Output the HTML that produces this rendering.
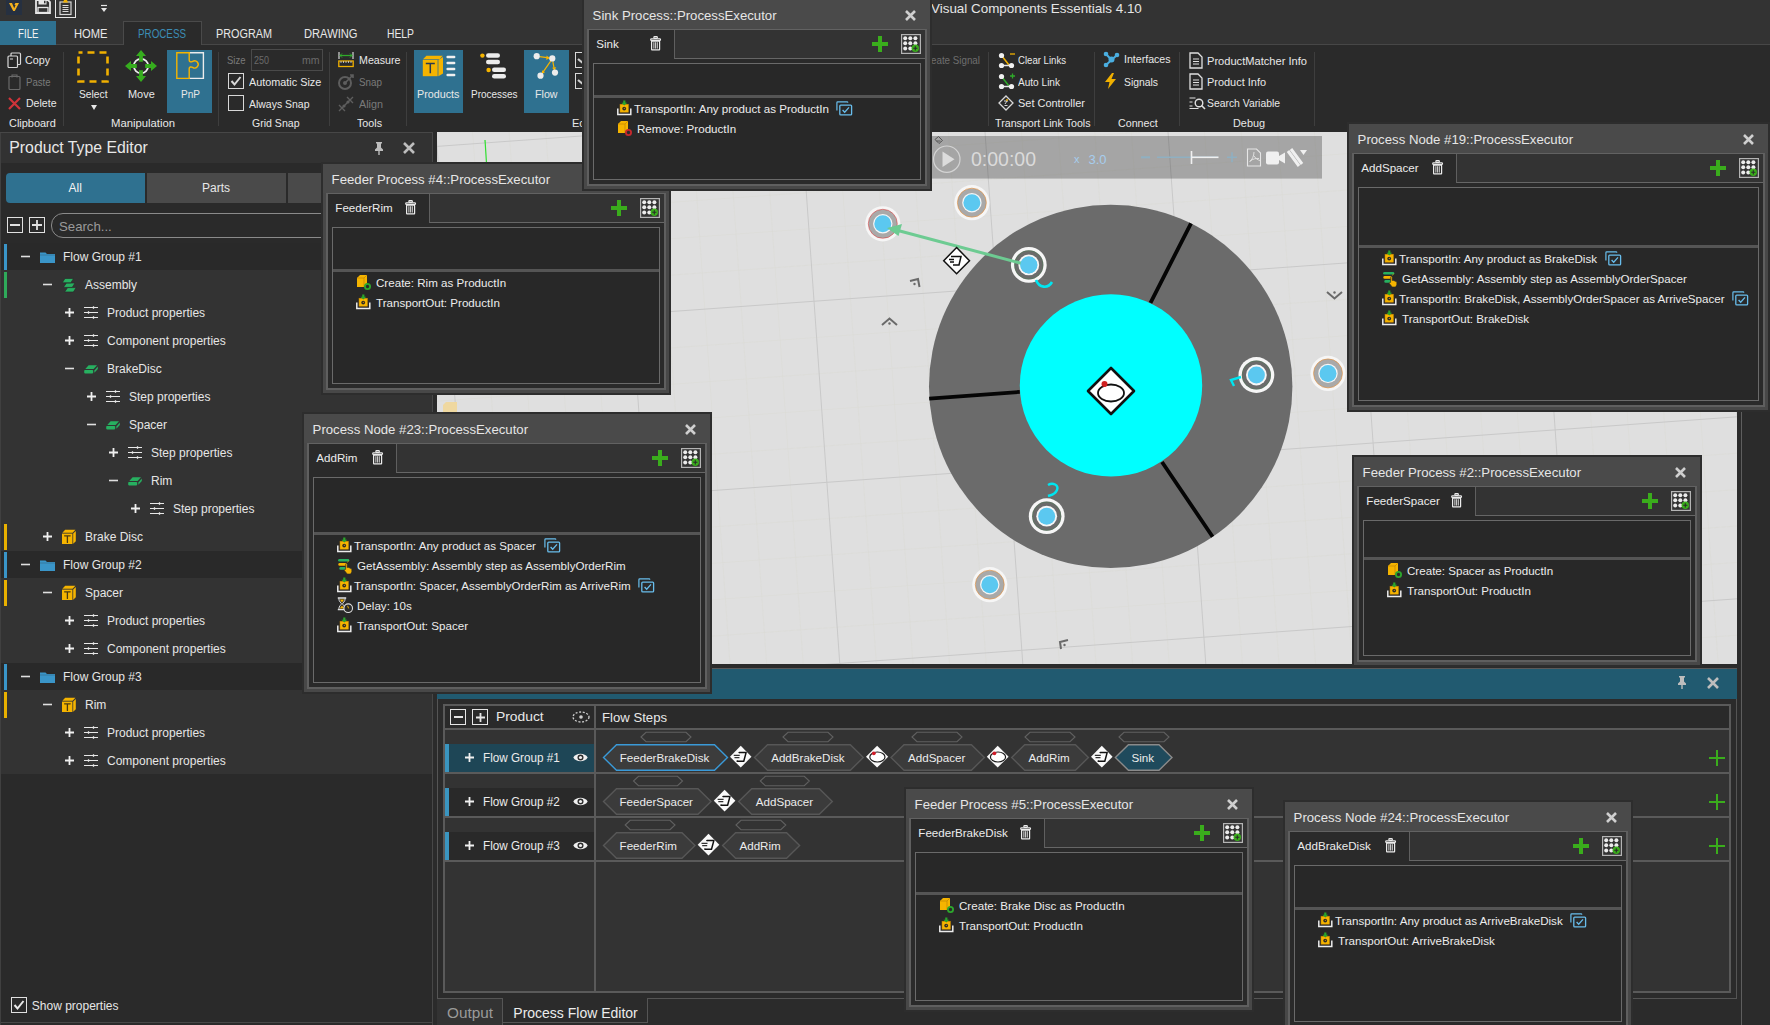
<!DOCTYPE html><html><head><meta charset='utf-8'><style>
*{box-sizing:border-box}
html,body{margin:0;padding:0;overflow:hidden;width:1770px;height:1025px}
body{width:1770px;height:1025px;overflow:hidden;position:relative;background:#2a2a2a;font-family:"Liberation Sans",sans-serif;color:#e8e8e8}
div{position:absolute}
.t{position:absolute;white-space:nowrap}
svg{position:absolute;overflow:visible}
</style></head><body>
<div style="left:0px;top:0px;width:1770px;height:44px;background:#333333"></div>
<div style="left:0px;top:44px;width:1770px;height:1px;background:#474747"></div>
<div style="left:0px;top:45px;width:1770px;height:87px;background:#2a2a2a"></div>
<div style="left:6px;top:0px;width:16px;height:15px;background:#263040"></div>
<svg style="position:absolute;left:9px;top:3px;" width="10" height="8" viewBox="0 0 10 8"><path d="M0 0h3l2.2 5.2L6.6 2H5.4L6.4 0H10L5.8 8H4.2z" fill="#f2b01e"/></svg>
<svg style="position:absolute;left:35px;top:-1px;" width="16" height="16" viewBox="0 0 16 16"><path d="M1 1h12l2 2v11H1z" fill="none" stroke="#e6e6e6" stroke-width="1.8"/><rect x="3.5" y="1" width="8" height="4.5" fill="#e6e6e6"/><rect x="9" y="1.8" width="1.5" height="2.5" fill="#333333"/><rect x="3" y="8.5" width="10" height="5" fill="#333333" stroke="#e6e6e6" stroke-width="1.3"/></svg>
<div style="left:55px;top:-2px;width:21px;height:20px;border:1.5px solid #e6e6e6"></div>
<svg style="position:absolute;left:59px;top:-1px;" width="13" height="17" viewBox="0 0 13 17"><rect x="1" y="3" width="11" height="12.5" fill="none" stroke="#d8d8d8" stroke-width="1.2"/><path d="M3.5 6.5h6M3.5 8.5h6M3.5 10.5h6M3.5 12.5h6" stroke="#d8d8d8" stroke-width="1"/><path d="M4 3.5l1-2.5h3l1 2.5z" fill="#f0b000"/></svg>
<svg style="position:absolute;left:101px;top:5px;" width="6" height="8" viewBox="0 0 6 8"><path d="M0 0.5h6" stroke="#e6e6e6" stroke-width="1.2"/><path d="M0 3h6L3 7z" fill="#e6e6e6"/></svg>
<div class="t" style="left:931px;top:0.0px;font-size:13.4px;line-height:17px;color:#e6e6e6;transform:scaleX(1.002);transform-origin:0 50%;">Visual Components Essentials 4.10</div>
<div style="left:0px;top:21px;width:56px;height:24px;background:#2f7190"></div>
<div class="t" style="left:18px;top:25.5px;font-size:12px;line-height:16px;color:#f2f2f2;transform:scaleX(0.809);transform-origin:0 50%;">FILE</div>
<div class="t" style="left:73.6px;top:25.5px;font-size:12px;line-height:16px;color:#e8e8e8;transform:scaleX(0.931);transform-origin:0 50%;">HOME</div>
<div style="left:123px;top:21px;width:79px;height:24px;background:#2a2a2a;border:1px solid #4a4a4a;border-bottom:none"></div>
<div class="t" style="left:137.7px;top:25.5px;font-size:12px;line-height:16px;color:#3c8db5;transform:scaleX(0.818);transform-origin:0 50%;">PROCESS</div>
<div class="t" style="left:216.3px;top:25.5px;font-size:12px;line-height:16px;color:#e8e8e8;transform:scaleX(0.903);transform-origin:0 50%;">PROGRAM</div>
<div class="t" style="left:303.6px;top:25.5px;font-size:12px;line-height:16px;color:#e8e8e8;transform:scaleX(0.930);transform-origin:0 50%;">DRAWING</div>
<div class="t" style="left:387.3px;top:25.5px;font-size:12px;line-height:16px;color:#e8e8e8;transform:scaleX(0.861);transform-origin:0 50%;">HELP</div>
<svg style="position:absolute;left:7px;top:52px;" width="15" height="16" viewBox="0 0 15 16"><rect x="4" y="1" width="9.5" height="11.5" rx="1" fill="#272727" stroke="#d8d8d8" stroke-width="1.2"/><rect x="1" y="4" width="9.5" height="11.5" rx="1" fill="#272727" stroke="#d8d8d8" stroke-width="1.2"/><path d="M3 7h3" stroke="#d8d8d8"/></svg>
<div class="t" style="left:25px;top:53.0px;font-size:11px;line-height:14px;color:#e8e8e8;transform:scaleX(0.974);transform-origin:0 50%;">Copy</div>
<svg style="position:absolute;left:8px;top:74px;" width="13" height="16" viewBox="0 0 13 16"><rect x="1" y="2.5" width="11" height="13" rx="1" fill="none" stroke="#6a6a6a" stroke-width="1.2"/><path d="M4 3.5V1h5v2.5" fill="none" stroke="#6a6a6a" stroke-width="1.1"/></svg>
<div class="t" style="left:25.5px;top:75.0px;font-size:11px;line-height:14px;color:#7a7a7a;transform:scaleX(0.871);transform-origin:0 50%;">Paste</div>
<svg style="position:absolute;left:8px;top:97px;" width="13" height="13" viewBox="0 0 13 13"><path d="M1 1L12 12M12 1L1 12" stroke="#d0343a" stroke-width="2.2"/></svg>
<div class="t" style="left:25.5px;top:96.0px;font-size:11px;line-height:14px;color:#e8e8e8;transform:scaleX(0.959);transform-origin:0 50%;">Delete</div>
<div class="t" style="left:8.5px;top:116.0px;font-size:11px;line-height:14px;color:#e8e8e8;transform:scaleX(0.994);transform-origin:0 50%;">Clipboard</div>
<div style="left:63px;top:52px;width:1px;height:74px;background:#3e3e3e"></div>
<svg style="position:absolute;left:77px;top:51px;" width="32" height="32" viewBox="0 0 32 32"><rect x="1.5" y="1.5" width="29" height="29" fill="none" stroke="#f0b000" stroke-width="2.6" stroke-dasharray="7 5" stroke-dashoffset="3"/></svg>
<div class="t" style="left:78.5px;top:87.0px;font-size:11px;line-height:14px;color:#e8e8e8;transform:scaleX(0.932);transform-origin:0 50%;">Select</div>
<svg style="position:absolute;left:91px;top:105px;" width="6" height="5" viewBox="0 0 6 5"><path d="M0 0h6L3 5z" fill="#e8e8e8"/></svg>
<svg style="position:absolute;left:125px;top:50px;" width="32" height="32" viewBox="0 0 32 32"><circle cx="16" cy="16" r="7.2" fill="none" stroke="#ececec" stroke-width="1.7"/><g fill="#36ad1e"><path d="M16 0l-5 6h3.1v5.8h3.8V6H21z"/><path d="M16 32l-5-6h3.1v-5.8h3.8V26H21z"/><path d="M0 16l6-5v3.1h5.8v3.8H6V21z"/><path d="M32 16l-6-5v3.1h-5.8v3.8H26V21z"/></g></svg>
<div class="t" style="left:127.7px;top:87.0px;font-size:11px;line-height:14px;color:#e8e8e8;transform:scaleX(0.993);transform-origin:0 50%;">Move</div>
<div style="left:167px;top:50px;width:45px;height:63px;background:#2f7190"></div>
<svg style="position:absolute;left:176px;top:52px;" width="28" height="28" viewBox="0 0 28 28"><path d="M13.2 0.8H27.4V26.4H13.2" fill="none" stroke="#ececec" stroke-width="1.4"/><path d="M13.2 0.8V8.2C13.2 10 15.2 10.2 16.6 9.4A3.6 3.6 0 1 1 16.6 15.4C15.2 14.6 13.2 14.8 13.2 16.6V26.4H0.8V0.8z" fill="none" stroke="#f5b400" stroke-width="1.4"/></svg>
<div class="t" style="left:180.6px;top:87.0px;font-size:11px;line-height:14px;color:#e8e8e8;transform:scaleX(0.914);transform-origin:0 50%;">PnP</div>
<div class="t" style="left:110.7px;top:116.0px;font-size:11px;line-height:14px;color:#e8e8e8;transform:scaleX(1.026);transform-origin:0 50%;">Manipulation</div>
<div style="left:218px;top:52px;width:1px;height:74px;background:#3e3e3e"></div>
<div class="t" style="left:226.7px;top:53.0px;font-size:11px;line-height:14px;color:#7a7a7a;transform:scaleX(0.865);transform-origin:0 50%;">Size</div>
<div style="left:251px;top:49px;width:72px;height:22px;border:1px solid #4a4a4a"></div>
<div class="t" style="left:253.6px;top:53.0px;font-size:11px;line-height:14px;color:#6a6a6a;transform:scaleX(0.817);transform-origin:0 50%;">250</div>
<div class="t" style="left:301.7px;top:53.0px;font-size:11px;line-height:14px;color:#6a6a6a;transform:scaleX(0.960);transform-origin:0 50%;">mm</div>
<div style="left:228px;top:73px;width:16px;height:16px;border:1.2px solid #d8d8d8"></div>
<svg style="position:absolute;left:230px;top:75px;" width="12" height="12" viewBox="0 0 12 12"><path d="M1.5 6l3 3.5L10.5 2" fill="none" stroke="#d8d8d8" stroke-width="2"/></svg>
<div class="t" style="left:249.3px;top:75.0px;font-size:11px;line-height:14px;color:#e8e8e8;transform:scaleX(0.985);transform-origin:0 50%;">Automatic Size</div>
<div style="left:228px;top:95px;width:16px;height:16px;border:1.2px solid #d8d8d8"></div>
<div class="t" style="left:249.3px;top:97.0px;font-size:11px;line-height:14px;color:#e8e8e8;transform:scaleX(0.951);transform-origin:0 50%;">Always Snap</div>
<div class="t" style="left:251.5px;top:116.0px;font-size:11px;line-height:14px;color:#e8e8e8;transform:scaleX(0.959);transform-origin:0 50%;">Grid Snap</div>
<div style="left:329px;top:52px;width:1px;height:74px;background:#3e3e3e"></div>
<svg style="position:absolute;left:338px;top:52px;" width="16" height="15" viewBox="0 0 16 15"><path d="M1 0v7M15 0v7" stroke="#d8d8d8" stroke-width="1.2"/><path d="M2 3.5h12" stroke="#2faa2a" stroke-width="1.3"/><path d="M2 3.5l2-2M2 3.5l2 2M14 3.5l-2-2M14 3.5l-2 2" stroke="#2faa2a" stroke-width="1"/><rect x="0.8" y="9" width="14.4" height="5.5" fill="none" stroke="#f0b000" stroke-width="1.3"/><path d="M3 9v2M5.5 9v2M8 9v2M10.5 9v2M13 9v2" stroke="#d8d8d8" stroke-width="0.8"/></svg>
<div class="t" style="left:358.6px;top:52.5px;font-size:11px;line-height:14px;color:#e8e8e8;transform:scaleX(0.970);transform-origin:0 50%;">Measure</div>
<svg style="position:absolute;left:338px;top:74px;" width="17" height="16" viewBox="0 0 17 16"><circle cx="7" cy="9" r="6" fill="none" stroke="#5e5e5e" stroke-width="2"/><circle cx="7" cy="9" r="2" fill="#5e5e5e"/><path d="M8 8l7-7M12 1h3v3" stroke="#5e5e5e" stroke-width="1.6" fill="none"/></svg>
<div class="t" style="left:358.6px;top:74.5px;font-size:11px;line-height:14px;color:#7a7a7a;transform:scaleX(0.895);transform-origin:0 50%;">Snap</div>
<svg style="position:absolute;left:338px;top:96px;" width="16" height="16" viewBox="0 0 16 16"><path d="M1 15L15 1M1 9l6 6M9 1l6 6" stroke="#5e5e5e" stroke-width="1.4"/><circle cx="6" cy="10" r="1.6" fill="#5e5e5e"/><circle cx="10" cy="6" r="1.6" fill="#5e5e5e"/></svg>
<div class="t" style="left:358.6px;top:96.5px;font-size:11px;line-height:14px;color:#7a7a7a;transform:scaleX(0.981);transform-origin:0 50%;">Align</div>
<div class="t" style="left:357px;top:116.0px;font-size:11px;line-height:14px;color:#e8e8e8;transform:scaleX(0.974);transform-origin:0 50%;">Tools</div>
<div style="left:406px;top:52px;width:1px;height:74px;background:#3e3e3e"></div>
<div style="left:414px;top:50px;width:49px;height:63px;background:#2f7190"></div>
<svg style="position:absolute;left:422px;top:55px;" width="34" height="22" viewBox="0 0 34 22"><g fill="#f5b400"><path d="M4.4 0.8H20.8L17.6 4.2H1z"/><rect x="0.8" y="4.9" width="14.8" height="16.3"/><path d="M21 2V18.4L16.4 21.2V4.9z"/></g><path d="M3.8 8.6h9M8.3 8.6v9.6" stroke="#2a3a50" stroke-width="1.5"/><g stroke="#f0f0f0" stroke-width="2.4" stroke-linecap="round"><path d="M25.6 2h6.6M25.6 8h6.6M25.6 14h6.6M25.6 20h6.6"/></g></svg>
<div class="t" style="left:417.4px;top:87.0px;font-size:11px;line-height:14px;color:#e8e8e8;transform:scaleX(0.979);transform-origin:0 50%;">Products</div>
<svg style="position:absolute;left:480px;top:53px;" width="27" height="26" viewBox="0 0 27 26"><circle cx="2.4" cy="2.6" r="2.2" fill="#f5b400"/><circle cx="8.6" cy="17" r="2.2" fill="#f5b400"/><g fill="#ececec"><rect x="6" y="0.2" width="14" height="4.6" rx="2.3"/><rect x="6" y="6.8" width="14" height="4.4" rx="2.2"/><rect x="12" y="14.6" width="14" height="4.4" rx="2.2"/><rect x="12" y="21" width="14" height="4.6" rx="2.3"/></g></svg>
<div class="t" style="left:470.5px;top:87.0px;font-size:11px;line-height:14px;color:#e8e8e8;transform:scaleX(0.905);transform-origin:0 50%;">Processes</div>
<div style="left:524px;top:50px;width:45px;height:63px;background:#2f7190"></div>
<svg style="position:absolute;left:533px;top:53px;" width="27" height="26" viewBox="0 0 27 26"><g stroke="#f5b400" stroke-width="1.2" fill="none"><path d="M6.5 3.6L16 4.9M18 7.6L9.3 20.2M19.8 8.3L21.3 16.4"/></g><g fill="#f5b400"><path d="M16.8 5L13.6 2.6 13.2 7z"/><path d="M8.6 21.2L9.2 17.2 12 19.2z"/><path d="M21.6 17.4L19 14.7 23.2 14.3z"/></g><g fill="#ececec"><circle cx="3.7" cy="3.2" r="3.1"/><circle cx="19.3" cy="5.4" r="3.1"/><circle cx="7.5" cy="22.7" r="3.1"/><circle cx="22" cy="19.6" r="3.1"/></g></svg>
<div class="t" style="left:535px;top:87.0px;font-size:11px;line-height:14px;color:#e8e8e8;transform:scaleX(0.969);transform-origin:0 50%;">Flow</div>
<div style="left:575px;top:52px;width:10px;height:16px;border:1.3px solid #d8d8d8;border-right:none"></div>
<div style="left:575px;top:73px;width:10px;height:16px;border:1.3px solid #d8d8d8;border-right:none"></div>
<svg style="position:absolute;left:577px;top:58px;" width="8" height="30" viewBox="0 0 8 30"><path d="M1 1l6 5M1 22l6 5" stroke="#cfcfcf" stroke-width="2.2"/></svg>
<div class="t" style="left:572px;top:116.0px;font-size:11px;line-height:14px;color:#e8e8e8;">Ec</div>
<div class="t" style="left:931px;top:53.0px;font-size:11px;line-height:14px;color:#6e6e6e;transform:scaleX(0.890);transform-origin:0 50%;">eate Signal</div>
<div style="left:988px;top:52px;width:1px;height:74px;background:#3e3e3e"></div>
<svg style="position:absolute;left:998px;top:52px;" width="18" height="17" viewBox="0 0 18 17"><path d="M3.5 3.5L11 13" stroke="#f0b000" stroke-width="1.5"/><path d="M3.5 13.5h10" stroke="#e6e6e6" stroke-width="1.5"/><circle cx="3.5" cy="3.5" r="2.6" fill="#f0f0f0"/><circle cx="3.5" cy="13.5" r="2.6" fill="#f0f0f0"/><circle cx="13.5" cy="13.5" r="2.6" fill="#f0f0f0"/><path d="M12 2h5" stroke="#f0b000" stroke-width="1.3"/></svg>
<div class="t" style="left:1017.8px;top:53.0px;font-size:11px;line-height:14px;color:#e8e8e8;transform:scaleX(0.872);transform-origin:0 50%;">Clear Links</div>
<svg style="position:absolute;left:998px;top:73px;" width="18" height="17" viewBox="0 0 18 17"><path d="M3.5 3.5L11 13" stroke="#2faa2a" stroke-width="1.5"/><path d="M3.5 13.5h10" stroke="#e6e6e6" stroke-width="1.5"/><circle cx="3.5" cy="3.5" r="2.6" fill="#f0f0f0"/><circle cx="3.5" cy="13.5" r="2.6" fill="#f0f0f0"/><circle cx="13.5" cy="13.5" r="2.6" fill="#f0f0f0"/><path d="M12 3h5M14.5 0.5v5" stroke="#2faa2a" stroke-width="1.3"/></svg>
<div class="t" style="left:1017.8px;top:75.0px;font-size:11px;line-height:14px;color:#e8e8e8;transform:scaleX(0.916);transform-origin:0 50%;">Auto Link</div>
<svg style="position:absolute;left:998px;top:95px;" width="16" height="16" viewBox="0 0 16 16"><path d="M8 1l7 7-7 7-7-7z" fill="none" stroke="#d8d8d8" stroke-width="1.3"/><path d="M6 6h4M7 9l2 -3M6.5 10.5h3" stroke="#d8d8d8" stroke-width="1"/><circle cx="9" cy="5" r="1" fill="#f0b000"/></svg>
<div class="t" style="left:1017.8px;top:96.0px;font-size:11px;line-height:14px;color:#e8e8e8;transform:scaleX(0.996);transform-origin:0 50%;">Set Controller</div>
<div class="t" style="left:995px;top:116.0px;font-size:11px;line-height:14px;color:#e8e8e8;transform:scaleX(0.971);transform-origin:0 50%;">Transport Link Tools</div>
<div style="left:1094px;top:52px;width:1px;height:74px;background:#3e3e3e"></div>
<svg style="position:absolute;left:1103px;top:51px;" width="17" height="16" viewBox="0 0 17 16"><path d="M3 3l5.5 6M3 14l5.5-5M8.5 9L14 4" stroke="#4aaee0" stroke-width="2"/><circle cx="8.5" cy="8.5" r="3" fill="#4aaee0"/><circle cx="3" cy="3" r="2.3" fill="#4aaee0"/><circle cx="3" cy="14" r="2.3" fill="#4aaee0"/><circle cx="14" cy="4" r="2.3" fill="#4aaee0"/></svg>
<div class="t" style="left:1123.8px;top:52.0px;font-size:11px;line-height:14px;color:#e8e8e8;transform:scaleX(0.963);transform-origin:0 50%;">Interfaces</div>
<svg style="position:absolute;left:1105px;top:73px;" width="12" height="16" viewBox="0 0 12 16"><path d="M7 0L0 9h4.5L3 16l8-10H6.5L9 0z" fill="#f0b000"/></svg>
<div class="t" style="left:1123.8px;top:74.5px;font-size:11px;line-height:14px;color:#e8e8e8;transform:scaleX(0.942);transform-origin:0 50%;">Signals</div>
<div class="t" style="left:1118.2px;top:116.0px;font-size:11px;line-height:14px;color:#e8e8e8;transform:scaleX(0.971);transform-origin:0 50%;">Connect</div>
<div style="left:1179px;top:52px;width:1px;height:74px;background:#3e3e3e"></div>
<svg style="position:absolute;left:1189px;top:52px;" width="14" height="17" viewBox="0 0 14 17"><path d="M1 1h8l4 4v11H1z" fill="none" stroke="#e0e0e0" stroke-width="1.3"/><path d="M4 7h6M4 9.5h6M4 12h6" stroke="#e0e0e0" stroke-width="1.1"/></svg>
<div class="t" style="left:1207px;top:53.5px;font-size:11px;line-height:14px;color:#e8e8e8;transform:scaleX(1.009);transform-origin:0 50%;">ProductMatcher Info</div>
<svg style="position:absolute;left:1189px;top:73px;" width="14" height="17" viewBox="0 0 14 17"><path d="M1 1h8l4 4v11H1z" fill="none" stroke="#e0e0e0" stroke-width="1.3"/><path d="M4 7h6M4 9.5h6M4 12h6" stroke="#e0e0e0" stroke-width="1.1"/></svg>
<div class="t" style="left:1207px;top:74.5px;font-size:11px;line-height:14px;color:#e8e8e8;transform:scaleX(0.995);transform-origin:0 50%;">Product Info</div>
<svg style="position:absolute;left:1189px;top:97px;" width="17" height="12" viewBox="0 0 17 12"><path d="M0.5 1h6M0.5 5h3M0.5 9h3M0.5 11.5h9" stroke="#e0e0e0" stroke-width="1.2"/><circle cx="10" cy="6" r="3.8" fill="none" stroke="#e0e0e0" stroke-width="1.4"/><path d="M12.5 8.5l3.5 3.5" stroke="#e0e0e0" stroke-width="1.6"/></svg>
<div class="t" style="left:1207px;top:96.0px;font-size:11px;line-height:14px;color:#e8e8e8;transform:scaleX(0.943);transform-origin:0 50%;">Search Variable</div>
<div class="t" style="left:1232.5px;top:116.0px;font-size:11px;line-height:14px;color:#e8e8e8;transform:scaleX(0.987);transform-origin:0 50%;">Debug</div>
<div style="left:1314px;top:52px;width:1px;height:74px;background:#3e3e3e"></div>
<div style="left:0px;top:132px;width:433px;height:893px;background:#2a2a2a"></div>
<div style="left:0px;top:132px;width:1px;height:893px;background:#404040"></div>
<div style="left:432px;top:132px;width:1px;height:893px;background:#474747"></div>
<div style="left:0px;top:132px;width:433px;height:1px;background:#474747"></div>
<div style="left:1px;top:133px;width:431px;height:30px;background:#323232"></div>
<div class="t" style="left:9.3px;top:137.0px;font-size:15.8px;line-height:21px;color:#e8e8e8;">Product Type Editor</div>
<svg style="position:absolute;left:374px;top:142px;" width="10" height="13" viewBox="0 0 10 13"><path d="M2 0h6v1.5H7v4l2 2v1.5H1V7.5l2-2v-4H2z" fill="#bdbdbd"/><rect x="4.3" y="9" width="1.4" height="4" fill="#bdbdbd"/></svg>
<svg style="position:absolute;left:403px;top:142px;" width="12" height="12" viewBox="0 0 12 12"><path d="M1 1L11 11M11 1L1 11" stroke="#bdbdbd" stroke-width="2.6"/></svg>
<div style="left:6px;top:173px;width:139px;height:30px;background:#2f7190;border-radius:4px 0 0 4px"></div>
<div class="t" style="left:68.5px;top:180.0px;font-size:12px;line-height:16px;color:#f4f4f4;">All</div>
<div style="left:147px;top:173px;width:139px;height:30px;background:#4a4a4a"></div>
<div class="t" style="left:202px;top:180.0px;font-size:12px;line-height:16px;color:#e8e8e8;">Parts</div>
<div style="left:288px;top:173px;width:144px;height:30px;background:#4a4a4a"></div>
<div style="left:7px;top:217px;width:16px;height:16px;border:1.5px solid #e0e0e0"></div>
<svg style="position:absolute;left:10px;top:224px;" width="10" height="2" viewBox="0 0 10 2"><rect width="10" height="2" fill="#e0e0e0"/></svg>
<div style="left:29px;top:217px;width:16px;height:16px;border:1.5px solid #e0e0e0"></div>
<svg style="position:absolute;left:32px;top:220px;" width="10" height="10" viewBox="0 0 10 10"><path d="M5 0v10M0 5h10" stroke="#e0e0e0" stroke-width="1.8"/></svg>
<div style="left:51px;top:213px;width:400px;height:25px;border:1.2px solid #8a8a8a;border-radius:12px"></div>
<div class="t" style="left:59px;top:218.0px;font-size:13.2px;line-height:17px;color:#9a9a9a;">Search...</div>
<div style="left:1px;top:243px;width:431px;height:531px;background:#333333"></div>
<div style="left:1px;top:243.2px;width:431px;height:27px;background:#292929"></div>
<div style="left:4px;top:243.7px;width:3px;height:26px;background:#3a95c8"></div>
<svg style="position:absolute;left:20.5px;top:252.2px;" width="9" height="9" viewBox="0 0 9 9"><path d="M0 4.5h9" stroke="#e0e0e0" stroke-width="1.6"/></svg>
<svg style="position:absolute;left:40px;top:250.7px;" width="15" height="12" viewBox="0 0 15 12"><path d="M0 1.5h5.5l1.5 1.5H15V12H0z" fill="#3a95c8"/><path d="M0 4h15" stroke="#2a2a2a" stroke-width="0.6" opacity="0.4"/></svg>
<div class="t" style="left:63px;top:248.7px;font-size:12px;line-height:16px;color:#e6e6e6;">Flow Group #1</div>
<div style="left:4px;top:271.7px;width:3px;height:26px;background:#2faa5a"></div>
<svg style="position:absolute;left:42.5px;top:280.2px;" width="9" height="9" viewBox="0 0 9 9"><path d="M0 4.5h9" stroke="#e0e0e0" stroke-width="1.6"/></svg>
<svg style="position:absolute;left:62px;top:277.7px;" width="15" height="15" viewBox="0 0 15 15"><g fill="#27b060" stroke="#2a2a2a" stroke-width="0.7" stroke-linejoin="round"><path d="M5.6 9.6H14.2L11.4 14H2.6z"/><path d="M4.4 5H13L10.2 9.4H1.4z"/><path d="M3 0.4H11.6L8.8 4.8H0.2z"/></g></svg>
<div class="t" style="left:85px;top:276.7px;font-size:12px;line-height:16px;color:#e6e6e6;">Assembly</div>
<svg style="position:absolute;left:64.5px;top:308.2px;" width="9" height="9" viewBox="0 0 9 9"><path d="M4.5 0v9M0 4.5h9" stroke="#f0f0f0" stroke-width="1.8"/></svg>
<svg style="position:absolute;left:84px;top:306.2px;" width="15" height="13" viewBox="0 0 15 13"><path d="M0 1.5h14M0 6.5h14M0 11.5h14" stroke="#e8e8e8" stroke-width="1"/><path d="M9.5 0l1.5 1.5-1.5 1.5-1.5-1.5zM4.5 5l1.5 1.5-1.5 1.5-1.5-1.5zM9.5 10l1.5 1.5-1.5 1.5-1.5-1.5z" fill="#e8e8e8"/></svg>
<div class="t" style="left:107px;top:304.7px;font-size:12px;line-height:16px;color:#e6e6e6;">Product properties</div>
<svg style="position:absolute;left:64.5px;top:336.2px;" width="9" height="9" viewBox="0 0 9 9"><path d="M4.5 0v9M0 4.5h9" stroke="#f0f0f0" stroke-width="1.8"/></svg>
<svg style="position:absolute;left:84px;top:334.2px;" width="15" height="13" viewBox="0 0 15 13"><path d="M0 1.5h14M0 6.5h14M0 11.5h14" stroke="#e8e8e8" stroke-width="1"/><path d="M9.5 0l1.5 1.5-1.5 1.5-1.5-1.5zM4.5 5l1.5 1.5-1.5 1.5-1.5-1.5zM9.5 10l1.5 1.5-1.5 1.5-1.5-1.5z" fill="#e8e8e8"/></svg>
<div class="t" style="left:107px;top:332.7px;font-size:12px;line-height:16px;color:#e6e6e6;">Component properties</div>
<svg style="position:absolute;left:64.5px;top:364.2px;" width="9" height="9" viewBox="0 0 9 9"><path d="M0 4.5h9" stroke="#e0e0e0" stroke-width="1.6"/></svg>
<svg style="position:absolute;left:84px;top:363.7px;" width="15" height="10" viewBox="0 0 15 10"><g fill="#27b060"><path d="M4.6 1.2H13L9.6 5.1H1.3z"/><rect x="0.2" y="6" width="9" height="3.4" rx="0.8"/><path d="M13.8 2.6V5L10.4 8.8V6.4z"/></g></svg>
<div class="t" style="left:107px;top:360.7px;font-size:12px;line-height:16px;color:#e6e6e6;">BrakeDisc</div>
<svg style="position:absolute;left:86.5px;top:392.2px;" width="9" height="9" viewBox="0 0 9 9"><path d="M4.5 0v9M0 4.5h9" stroke="#f0f0f0" stroke-width="1.8"/></svg>
<svg style="position:absolute;left:106px;top:390.2px;" width="15" height="13" viewBox="0 0 15 13"><path d="M0 1.5h14M0 6.5h14M0 11.5h14" stroke="#e8e8e8" stroke-width="1"/><path d="M9.5 0l1.5 1.5-1.5 1.5-1.5-1.5zM4.5 5l1.5 1.5-1.5 1.5-1.5-1.5zM9.5 10l1.5 1.5-1.5 1.5-1.5-1.5z" fill="#e8e8e8"/></svg>
<div class="t" style="left:129px;top:388.7px;font-size:12px;line-height:16px;color:#e6e6e6;">Step properties</div>
<svg style="position:absolute;left:86.5px;top:420.2px;" width="9" height="9" viewBox="0 0 9 9"><path d="M0 4.5h9" stroke="#e0e0e0" stroke-width="1.6"/></svg>
<svg style="position:absolute;left:106px;top:419.7px;" width="15" height="10" viewBox="0 0 15 10"><g fill="#27b060"><path d="M4.6 1.2H13L9.6 5.1H1.3z"/><rect x="0.2" y="6" width="9" height="3.4" rx="0.8"/><path d="M13.8 2.6V5L10.4 8.8V6.4z"/></g></svg>
<div class="t" style="left:129px;top:416.7px;font-size:12px;line-height:16px;color:#e6e6e6;">Spacer</div>
<svg style="position:absolute;left:108.5px;top:448.2px;" width="9" height="9" viewBox="0 0 9 9"><path d="M4.5 0v9M0 4.5h9" stroke="#f0f0f0" stroke-width="1.8"/></svg>
<svg style="position:absolute;left:128px;top:446.2px;" width="15" height="13" viewBox="0 0 15 13"><path d="M0 1.5h14M0 6.5h14M0 11.5h14" stroke="#e8e8e8" stroke-width="1"/><path d="M9.5 0l1.5 1.5-1.5 1.5-1.5-1.5zM4.5 5l1.5 1.5-1.5 1.5-1.5-1.5zM9.5 10l1.5 1.5-1.5 1.5-1.5-1.5z" fill="#e8e8e8"/></svg>
<div class="t" style="left:151px;top:444.7px;font-size:12px;line-height:16px;color:#e6e6e6;">Step properties</div>
<svg style="position:absolute;left:108.5px;top:476.2px;" width="9" height="9" viewBox="0 0 9 9"><path d="M0 4.5h9" stroke="#e0e0e0" stroke-width="1.6"/></svg>
<svg style="position:absolute;left:128px;top:475.7px;" width="15" height="10" viewBox="0 0 15 10"><g fill="#27b060"><path d="M4.6 1.2H13L9.6 5.1H1.3z"/><rect x="0.2" y="6" width="9" height="3.4" rx="0.8"/><path d="M13.8 2.6V5L10.4 8.8V6.4z"/></g></svg>
<div class="t" style="left:151px;top:472.7px;font-size:12px;line-height:16px;color:#e6e6e6;">Rim</div>
<svg style="position:absolute;left:130.5px;top:504.2px;" width="9" height="9" viewBox="0 0 9 9"><path d="M4.5 0v9M0 4.5h9" stroke="#f0f0f0" stroke-width="1.8"/></svg>
<svg style="position:absolute;left:150px;top:502.2px;" width="15" height="13" viewBox="0 0 15 13"><path d="M0 1.5h14M0 6.5h14M0 11.5h14" stroke="#e8e8e8" stroke-width="1"/><path d="M9.5 0l1.5 1.5-1.5 1.5-1.5-1.5zM4.5 5l1.5 1.5-1.5 1.5-1.5-1.5zM9.5 10l1.5 1.5-1.5 1.5-1.5-1.5z" fill="#e8e8e8"/></svg>
<div class="t" style="left:173px;top:500.7px;font-size:12px;line-height:16px;color:#e6e6e6;">Step properties</div>
<div style="left:4px;top:523.7px;width:3px;height:26px;background:#e8b000"></div>
<svg style="position:absolute;left:42.5px;top:532.2px;" width="9" height="9" viewBox="0 0 9 9"><path d="M4.5 0v9M0 4.5h9" stroke="#f0f0f0" stroke-width="1.8"/></svg>
<svg style="position:absolute;left:62px;top:529.2px;" width="15" height="16" viewBox="0 0 15 16"><g fill="#f5b400"><path d="M3.2 0.8H13.4L10.6 3.8H0.4z"/><rect x="0" y="4.6" width="10.4" height="10.4"/><path d="M13.8 2V12.2L11.2 14.8V4.6z"/></g><path d="M2.6 6.8h5.6M5.4 6.8v6.6" stroke="#4a3a10" stroke-width="1.3" stroke-linecap="round"/></svg>
<div class="t" style="left:85px;top:528.7px;font-size:12px;line-height:16px;color:#e6e6e6;">Brake Disc</div>
<div style="left:1px;top:551.2px;width:431px;height:27px;background:#292929"></div>
<div style="left:4px;top:551.7px;width:3px;height:26px;background:#3a95c8"></div>
<svg style="position:absolute;left:20.5px;top:560.2px;" width="9" height="9" viewBox="0 0 9 9"><path d="M0 4.5h9" stroke="#e0e0e0" stroke-width="1.6"/></svg>
<svg style="position:absolute;left:40px;top:558.7px;" width="15" height="12" viewBox="0 0 15 12"><path d="M0 1.5h5.5l1.5 1.5H15V12H0z" fill="#3a95c8"/><path d="M0 4h15" stroke="#2a2a2a" stroke-width="0.6" opacity="0.4"/></svg>
<div class="t" style="left:63px;top:556.7px;font-size:12px;line-height:16px;color:#e6e6e6;">Flow Group #2</div>
<div style="left:4px;top:579.7px;width:3px;height:26px;background:#e8b000"></div>
<svg style="position:absolute;left:42.5px;top:588.2px;" width="9" height="9" viewBox="0 0 9 9"><path d="M0 4.5h9" stroke="#e0e0e0" stroke-width="1.6"/></svg>
<svg style="position:absolute;left:62px;top:585.2px;" width="15" height="16" viewBox="0 0 15 16"><g fill="#f5b400"><path d="M3.2 0.8H13.4L10.6 3.8H0.4z"/><rect x="0" y="4.6" width="10.4" height="10.4"/><path d="M13.8 2V12.2L11.2 14.8V4.6z"/></g><path d="M2.6 6.8h5.6M5.4 6.8v6.6" stroke="#4a3a10" stroke-width="1.3" stroke-linecap="round"/></svg>
<div class="t" style="left:85px;top:584.7px;font-size:12px;line-height:16px;color:#e6e6e6;">Spacer</div>
<svg style="position:absolute;left:64.5px;top:616.2px;" width="9" height="9" viewBox="0 0 9 9"><path d="M4.5 0v9M0 4.5h9" stroke="#f0f0f0" stroke-width="1.8"/></svg>
<svg style="position:absolute;left:84px;top:614.2px;" width="15" height="13" viewBox="0 0 15 13"><path d="M0 1.5h14M0 6.5h14M0 11.5h14" stroke="#e8e8e8" stroke-width="1"/><path d="M9.5 0l1.5 1.5-1.5 1.5-1.5-1.5zM4.5 5l1.5 1.5-1.5 1.5-1.5-1.5zM9.5 10l1.5 1.5-1.5 1.5-1.5-1.5z" fill="#e8e8e8"/></svg>
<div class="t" style="left:107px;top:612.7px;font-size:12px;line-height:16px;color:#e6e6e6;">Product properties</div>
<svg style="position:absolute;left:64.5px;top:644.2px;" width="9" height="9" viewBox="0 0 9 9"><path d="M4.5 0v9M0 4.5h9" stroke="#f0f0f0" stroke-width="1.8"/></svg>
<svg style="position:absolute;left:84px;top:642.2px;" width="15" height="13" viewBox="0 0 15 13"><path d="M0 1.5h14M0 6.5h14M0 11.5h14" stroke="#e8e8e8" stroke-width="1"/><path d="M9.5 0l1.5 1.5-1.5 1.5-1.5-1.5zM4.5 5l1.5 1.5-1.5 1.5-1.5-1.5zM9.5 10l1.5 1.5-1.5 1.5-1.5-1.5z" fill="#e8e8e8"/></svg>
<div class="t" style="left:107px;top:640.7px;font-size:12px;line-height:16px;color:#e6e6e6;">Component properties</div>
<div style="left:1px;top:663.2px;width:431px;height:27px;background:#292929"></div>
<div style="left:4px;top:663.7px;width:3px;height:26px;background:#3a95c8"></div>
<svg style="position:absolute;left:20.5px;top:672.2px;" width="9" height="9" viewBox="0 0 9 9"><path d="M0 4.5h9" stroke="#e0e0e0" stroke-width="1.6"/></svg>
<svg style="position:absolute;left:40px;top:670.7px;" width="15" height="12" viewBox="0 0 15 12"><path d="M0 1.5h5.5l1.5 1.5H15V12H0z" fill="#3a95c8"/><path d="M0 4h15" stroke="#2a2a2a" stroke-width="0.6" opacity="0.4"/></svg>
<div class="t" style="left:63px;top:668.7px;font-size:12px;line-height:16px;color:#e6e6e6;">Flow Group #3</div>
<div style="left:4px;top:691.7px;width:3px;height:26px;background:#e8b000"></div>
<svg style="position:absolute;left:42.5px;top:700.2px;" width="9" height="9" viewBox="0 0 9 9"><path d="M0 4.5h9" stroke="#e0e0e0" stroke-width="1.6"/></svg>
<svg style="position:absolute;left:62px;top:697.2px;" width="15" height="16" viewBox="0 0 15 16"><g fill="#f5b400"><path d="M3.2 0.8H13.4L10.6 3.8H0.4z"/><rect x="0" y="4.6" width="10.4" height="10.4"/><path d="M13.8 2V12.2L11.2 14.8V4.6z"/></g><path d="M2.6 6.8h5.6M5.4 6.8v6.6" stroke="#4a3a10" stroke-width="1.3" stroke-linecap="round"/></svg>
<div class="t" style="left:85px;top:696.7px;font-size:12px;line-height:16px;color:#e6e6e6;">Rim</div>
<svg style="position:absolute;left:64.5px;top:728.2px;" width="9" height="9" viewBox="0 0 9 9"><path d="M4.5 0v9M0 4.5h9" stroke="#f0f0f0" stroke-width="1.8"/></svg>
<svg style="position:absolute;left:84px;top:726.2px;" width="15" height="13" viewBox="0 0 15 13"><path d="M0 1.5h14M0 6.5h14M0 11.5h14" stroke="#e8e8e8" stroke-width="1"/><path d="M9.5 0l1.5 1.5-1.5 1.5-1.5-1.5zM4.5 5l1.5 1.5-1.5 1.5-1.5-1.5zM9.5 10l1.5 1.5-1.5 1.5-1.5-1.5z" fill="#e8e8e8"/></svg>
<div class="t" style="left:107px;top:724.7px;font-size:12px;line-height:16px;color:#e6e6e6;">Product properties</div>
<svg style="position:absolute;left:64.5px;top:756.2px;" width="9" height="9" viewBox="0 0 9 9"><path d="M4.5 0v9M0 4.5h9" stroke="#f0f0f0" stroke-width="1.8"/></svg>
<svg style="position:absolute;left:84px;top:754.2px;" width="15" height="13" viewBox="0 0 15 13"><path d="M0 1.5h14M0 6.5h14M0 11.5h14" stroke="#e8e8e8" stroke-width="1"/><path d="M9.5 0l1.5 1.5-1.5 1.5-1.5-1.5zM4.5 5l1.5 1.5-1.5 1.5-1.5-1.5zM9.5 10l1.5 1.5-1.5 1.5-1.5-1.5z" fill="#e8e8e8"/></svg>
<div class="t" style="left:107px;top:752.7px;font-size:12px;line-height:16px;color:#e6e6e6;">Component properties</div>
<div style="left:11px;top:997px;width:16px;height:16px;border:1.3px solid #e0e0e0"></div>
<svg style="position:absolute;left:13px;top:999px;" width="12" height="12" viewBox="0 0 12 12"><path d="M1.5 6l3 3.5L10.5 2" fill="none" stroke="#e8e8e8" stroke-width="2"/></svg>
<div class="t" style="left:31.8px;top:997.7px;font-size:12px;line-height:16px;color:#e6e6e6;">Show properties</div>
<div style="left:1px;top:1022px;width:431px;height:1px;background:#474747"></div>
<svg style="position:absolute;left:437px;top:132px;overflow:hidden" width="1300" height="532" viewBox="0 0 1300 532"><rect x="0" y="0" width="1300" height="532" fill="#dfdfdf"/><path d="M-513.4 0L-475.6 532 M-476.8 0L-439.0 532 M-440.2 0L-402.4 532 M-403.6 0L-365.8 532 M-330.4 0L-292.6 532 M-293.8 0L-256.0 532 M-257.2 0L-219.4 532 M-220.6 0L-182.8 532 M-147.4 0L-109.6 532 M-110.8 0L-73.0 532 M-74.2 0L-36.4 532 M-37.6 0L0.2 532 M35.6 0L73.4 532 M72.2 0L110.0 532 M108.8 0L146.6 532 M145.4 0L183.2 532 M218.6 0L256.4 532 M255.2 0L293.0 532 M291.8 0L329.6 532 M328.4 0L366.2 532 M401.6 0L439.4 532 M438.2 0L476.0 532 M474.8 0L512.6 532 M511.4 0L549.2 532 M584.6 0L622.4 532 M621.2 0L659.0 532 M657.8 0L695.6 532 M694.4 0L732.2 532 M767.6 0L805.4 532 M804.2 0L842.0 532 M840.8 0L878.6 532 M877.4 0L915.2 532 M950.6 0L988.4 532 M987.2 0L1025.0 532 M1023.8 0L1061.6 532 M1060.4 0L1098.2 532 M1133.6 0L1171.4 532 M1170.2 0L1208.0 532 M1206.8 0L1244.6 532 M1243.4 0L1281.2 532 M1316.6 0L1354.4 532 M1353.2 0L1391.0 532 M1389.8 0L1427.6 532 M1426.4 0L1464.2 532 M1499.6 0L1537.4 532 M1536.2 0L1574.0 532 M1572.8 0L1610.6 532 M1609.4 0L1647.2 532 M0 -313.2L1300 -406.8 M0 -276.8L1300 -370.4 M0 -240.4L1300 -334.0 M0 -204.0L1300 -297.6 M0 -131.2L1300 -224.8 M0 -94.8L1300 -188.4 M0 -58.4L1300 -152.0 M0 -22.0L1300 -115.6 M0 50.8L1300 -42.8 M0 87.2L1300 -6.4 M0 123.6L1300 30.0 M0 160.0L1300 66.4 M0 232.8L1300 139.2 M0 269.2L1300 175.6 M0 305.6L1300 212.0 M0 342.0L1300 248.4 M0 414.8L1300 321.2 M0 451.2L1300 357.6 M0 487.6L1300 394.0 M0 524.0L1300 430.4 M0 596.8L1300 503.2 M0 633.2L1300 539.6 M0 669.6L1300 576.0 M0 706.0L1300 612.4 M0 778.8L1300 685.2 M0 815.2L1300 721.6 M0 851.6L1300 758.0 M0 888.0L1300 794.4 M0 960.8L1300 867.2 M0 997.2L1300 903.6 M0 1033.6L1300 940.0 M0 1070.0L1300 976.4" stroke="#dbdbd5" stroke-width="0.5" fill="none"/><path d="M-550.0 0L-512.2 532 M-367.0 0L-329.2 532 M-184.0 0L-146.2 532 M-1.0 0L36.8 532 M182.0 0L219.8 532 M365.0 0L402.8 532 M548.0 0L585.8 532 M731.0 0L768.8 532 M914.0 0L951.8 532 M1097.0 0L1134.8 532 M1280.0 0L1317.8 532 M1463.0 0L1500.8 532 M0 -349.6L1300 -443.2 M0 -167.6L1300 -261.2 M0 14.4L1300 -79.2 M0 196.4L1300 102.8 M0 378.4L1300 284.8 M0 560.4L1300 466.8 M0 742.4L1300 648.8 M0 924.4L1300 830.8" stroke="#c9c9c9" stroke-width="1" fill="none"/><path d="M48 8L49.5 31" stroke="#30e030" stroke-width="1.2"/><g transform="translate(-437,-132)"><circle cx="1110.7" cy="386.4" r="181.7" fill="#6b6b6b"/><circle cx="1111" cy="385.4" r="91.2" fill="#00ffff"/><path d="M1150.5 302.8L1191 223.3M1019.8 391.9L929.2 398.7M1162 462L1212.6 536.7" stroke="#050505" stroke-width="3.8"/><path d="M1111 368L1134 391L1111 414L1088 391z" fill="#ffffff" stroke="#111" stroke-width="2.6" stroke-linejoin="round"/><ellipse cx="1111" cy="393" rx="13" ry="8.5" fill="none" stroke="#111" stroke-width="1.8"/><circle cx="1104.5" cy="384" r="3" fill="#d02020"/><circle cx="882.8" cy="223.8" r="17.6" fill="#f6f6f6"/><circle cx="882.8" cy="223.8" r="14.3" fill="#a9a9a9"/><circle cx="882.8" cy="223.8" r="14.5" fill="none" stroke="#d03030" stroke-width="0.8" opacity="0.7"/><circle cx="882.8" cy="223.8" r="9.7" fill="#f6f6f6"/><circle cx="882.8" cy="223.8" r="8.5" fill="#5bc8f0"/><circle cx="971.9" cy="202.7" r="17.6" fill="#f6f6f6"/><circle cx="971.9" cy="202.7" r="14.3" fill="#a9a9a9"/><circle cx="971.9" cy="202.7" r="14.5" fill="none" stroke="#e08020" stroke-width="0.8" opacity="0.7"/><circle cx="971.9" cy="202.7" r="9.7" fill="#f6f6f6"/><circle cx="971.9" cy="202.7" r="8.5" fill="#5bc8f0"/><circle cx="1028.8" cy="264.9" r="17.9" fill="#f6f6f6"/><circle cx="1028.8" cy="264.9" r="14.6" fill="#6b6b6b"/><circle cx="1028.8" cy="264.9" r="14.2" fill="none" stroke="#3c8a4a" stroke-width="0.6" opacity="0.5"/><circle cx="1028.8" cy="264.9" r="10.4" fill="#f6f6f6"/><circle cx="1028.8" cy="264.9" r="8.5" fill="#5bc8f0"/><circle cx="1256.4" cy="375" r="17.9" fill="#f6f6f6"/><circle cx="1256.4" cy="375" r="14.6" fill="#6b6b6b"/><circle cx="1256.4" cy="375" r="14.2" fill="none" stroke="#3c8a4a" stroke-width="0.6" opacity="0.5"/><circle cx="1256.4" cy="375" r="10.4" fill="#f6f6f6"/><circle cx="1256.4" cy="375" r="8.5" fill="#5bc8f0"/><circle cx="1328" cy="373.4" r="17.6" fill="#f6f6f6"/><circle cx="1328" cy="373.4" r="14.3" fill="#a9a9a9"/><circle cx="1328" cy="373.4" r="14.5" fill="none" stroke="#e08020" stroke-width="0.8" opacity="0.7"/><circle cx="1328" cy="373.4" r="9.7" fill="#f6f6f6"/><circle cx="1328" cy="373.4" r="8.5" fill="#5bc8f0"/><circle cx="1046.7" cy="516.2" r="17.9" fill="#f6f6f6"/><circle cx="1046.7" cy="516.2" r="14.6" fill="#6b6b6b"/><circle cx="1046.7" cy="516.2" r="14.2" fill="none" stroke="#3c8a4a" stroke-width="0.6" opacity="0.5"/><circle cx="1046.7" cy="516.2" r="10.4" fill="#f6f6f6"/><circle cx="1046.7" cy="516.2" r="8.5" fill="#5bc8f0"/><circle cx="989.8" cy="584.7" r="17.6" fill="#f6f6f6"/><circle cx="989.8" cy="584.7" r="14.3" fill="#a9a9a9"/><circle cx="989.8" cy="584.7" r="14.5" fill="none" stroke="#e08020" stroke-width="0.8" opacity="0.7"/><circle cx="989.8" cy="584.7" r="9.7" fill="#f6f6f6"/><circle cx="989.8" cy="584.7" r="8.5" fill="#5bc8f0"/><path d="M1022 263.5L898 230.5" stroke="#6dcb92" stroke-width="3"/><path d="M887 228L902 224L898.5 236z" fill="#6dcb92"/><circle cx="1028.8" cy="264.9" r="8.5" fill="#5bc8f0"/><path d="M1036 280c3 8 12 9 16 2" fill="none" stroke="#00e5f0" stroke-width="2.6"/><path d="M1241 377l-10 3 3 6" fill="none" stroke="#00e5f0" stroke-width="2.4"/><path d="M1048 485c5-3 11 0 9 5s-6 5-9 6" fill="none" stroke="#00e5f0" stroke-width="2.4"/><path d="M956.6 247.5L969.5 260.7L956.6 273.8L943.7 260.7z" fill="#fff" stroke="#111" stroke-width="1.5"/><path d="M951 256.5h10l-2 8.5h-6M949 259.5h5M950 262h4" fill="none" stroke="#111" stroke-width="1.5"/><path d="M910 281l8-2 1.5 8" fill="none" stroke="#6a6a6a" stroke-width="2"/><circle cx="914.5" cy="284" r="1.2" fill="#6a6a6a"/><path d="M882 325l7.5-6.5 7.5 6.5" fill="none" stroke="#6a6a6a" stroke-width="2"/><circle cx="889.5" cy="323.5" r="1.2" fill="#6a6a6a"/><path d="M1327 292l7.5 6.5 7.5-6.5" fill="none" stroke="#6a6a6a" stroke-width="2"/><circle cx="1334.5" cy="292.5" r="1.2" fill="#6a6a6a"/><path d="M1061 649l-1-7 8-2" fill="none" stroke="#6a6a6a" stroke-width="2"/><circle cx="1064.5" cy="645" r="1.2" fill="#6a6a6a"/><rect x="930" y="136" width="392" height="42.6" fill="#000" fill-opacity="0.26"/><circle cx="946.8" cy="159.2" r="13.2" fill="none" stroke="#d4d4d4" stroke-width="1.2"/><path d="M942.5 151.5L954.5 159.2L942.5 167z" fill="#dcdcdc"/><path d="M1141 157.3h9" stroke="#8fb0c2" stroke-width="2"/><path d="M1157 157.3h61" stroke="#8fb0c2" stroke-width="1.5"/><path d="M1191.5 157.3h27" stroke="#f0f0f0" stroke-width="1.6"/><path d="M1191.5 151v13" stroke="#f0f0f0" stroke-width="1.6"/><path d="M1227 157.3h10M1232 152.3v10" stroke="#8fb0c2" stroke-width="1.6"/><path d="M1247.5 149h9l4 4v13h-13z" fill="none" stroke="#e6e6e6" stroke-width="1.1"/><path d="M1254 152c0 4-2 8-4.5 10M1254 156c2 3 4 4 6 4.5M1250 161c3-2 6-3 9-2.5" fill="none" stroke="#e6e6e6" stroke-width="0.9"/><rect x="1266" y="151.5" width="13" height="13" rx="2" fill="#f0f0f0"/><path d="M1279 156l6-3.5v11l-6-3.5z" fill="#f0f0f0"/><path d="M1288 151l11 15M1291 149l11 15" stroke="#f0f0f0" stroke-width="3"/><path d="M1300 150h7l-3.5 5z" fill="#f0f0f0"/><path d="M935 139.5l3.5-3 4 4-3.5 3z M936.5 141l4 0" fill="none" stroke="#555" stroke-width="1"/></g></svg>
<div class="t" style="left:971px;top:147.0px;font-size:19.5px;line-height:25px;color:#dadada;">0:00:00</div>
<div class="t" style="left:1074px;top:152.0px;font-size:11px;line-height:14px;color:#a6cdee;">x</div>
<div class="t" style="left:1088.5px;top:151.0px;font-size:13px;line-height:17px;color:#a6cdee;">3.0</div>
<svg style="position:absolute;left:443px;top:402px;" width="14" height="11" viewBox="0 0 14 11"><path d="M0 3l3-3h11v11H0z" fill="#efd8a0"/></svg>
<div style="left:433px;top:664px;width:1308px;height:361px;background:#2b2b2b"></div>
<div style="left:432px;top:664px;width:1px;height:361px;background:#474747"></div>
<div style="left:437px;top:699px;width:1px;height:299px;background:#555"></div>
<div style="left:437px;top:668px;width:1300px;height:1px;background:#5a5a5a"></div>
<div style="left:437px;top:669px;width:1300px;height:30px;background:#215a70"></div>
<svg style="position:absolute;left:1677px;top:676px;" width="10" height="13" viewBox="0 0 10 13"><path d="M2 0h6v1.5H7v4l2 2v1.5H1V7.5l2-2v-4H2z" fill="#bdbdbd"/><rect x="4.3" y="9" width="1.4" height="4" fill="#bdbdbd"/></svg>
<svg style="position:absolute;left:1707px;top:677px;" width="12" height="12" viewBox="0 0 12 12"><path d="M1 1L11 11M11 1L1 11" stroke="#bdbdbd" stroke-width="2.6"/></svg>
<div style="left:443px;top:704px;width:1288px;height:289px;background:#333333;border:2px solid #5a5a5a"></div>
<div style="left:445px;top:706px;width:1284px;height:22px;background:#2a2a2a"></div>
<div style="left:445px;top:728px;width:1284px;height:2px;background:#5a5a5a"></div>
<div style="left:594px;top:706px;width:2px;height:285px;background:#5a5a5a"></div>
<div style="left:445px;top:772px;width:1284px;height:2px;background:#5a5a5a"></div>
<div style="left:445px;top:816px;width:1284px;height:2px;background:#5a5a5a"></div>
<div style="left:445px;top:860px;width:1284px;height:2px;background:#5a5a5a"></div>
<div style="left:450px;top:709px;width:16px;height:16px;border:1.6px solid #e6e6e6"></div>
<svg style="position:absolute;left:453.5px;top:716px;" width="9" height="2" viewBox="0 0 9 2"><rect width="9" height="2" fill="#e6e6e6"/></svg>
<div style="left:472px;top:709px;width:16px;height:16px;border:1.6px solid #e6e6e6"></div>
<svg style="position:absolute;left:475.5px;top:712.5px;" width="9" height="9" viewBox="0 0 9 9"><path d="M4.5 0v9M0 4.5h9" stroke="#e6e6e6" stroke-width="1.8"/></svg>
<div class="t" style="left:495.5px;top:708.0px;font-size:13.5px;line-height:18px;color:#e8e8e8;transform:scaleX(1.025);transform-origin:0 50%;">Product</div>
<svg style="position:absolute;left:572px;top:711px;" width="18" height="12" viewBox="0 0 18 12"><ellipse cx="9" cy="6" rx="8" ry="5" fill="none" stroke="#cfcfcf" stroke-width="1.3" stroke-dasharray="2 1.6"/><circle cx="9" cy="6" r="1.8" fill="#cfcfcf"/></svg>
<div class="t" style="left:602.2px;top:708.5px;font-size:13px;line-height:17px;color:#e8e8e8;transform:scaleX(1.011);transform-origin:0 50%;">Flow Steps</div>
<div style="left:445px;top:744px;width:149px;height:28px;background:#1e4656"></div>
<div style="left:445px;top:744px;width:4px;height:28px;background:#3a95c0"></div>
<svg style="position:absolute;left:465px;top:753.3px;" width="9" height="9" viewBox="0 0 9 9"><path d="M4.5 0v9M0 4.5h9" stroke="#f0f0f0" stroke-width="1.8"/></svg>
<div class="t" style="left:483.4px;top:749.8px;font-size:12px;line-height:16px;color:#ececec;transform:scaleX(0.975);transform-origin:0 50%;">Flow Group #1</div>
<svg style="position:absolute;left:572.5px;top:753.3px;" width="15" height="9" viewBox="0 0 15 9"><path d="M0.3 4.5C3 -0.5 12 -0.5 14.7 4.5C12 9.5 3 9.5 0.3 4.5z" fill="#f0f0f0"/><circle cx="7.5" cy="4.5" r="3" fill="#2a2a2a"/><circle cx="7.5" cy="4.5" r="1.6" fill="#f0f0f0"/></svg>
<svg style="position:absolute;left:1709px;top:749.8px;" width="16" height="16" viewBox="0 0 16 16"><path d="M8 0v16M0 8h16" stroke="#3aad1c" stroke-width="2"/></svg>
<div style="left:445px;top:788px;width:149px;height:28px;background:#292929"></div>
<div style="left:445px;top:788px;width:4px;height:28px;background:#3a95c0"></div>
<svg style="position:absolute;left:465px;top:797.3px;" width="9" height="9" viewBox="0 0 9 9"><path d="M4.5 0v9M0 4.5h9" stroke="#f0f0f0" stroke-width="1.8"/></svg>
<div class="t" style="left:483.4px;top:793.8px;font-size:12px;line-height:16px;color:#ececec;transform:scaleX(0.975);transform-origin:0 50%;">Flow Group #2</div>
<svg style="position:absolute;left:572.5px;top:797.3px;" width="15" height="9" viewBox="0 0 15 9"><path d="M0.3 4.5C3 -0.5 12 -0.5 14.7 4.5C12 9.5 3 9.5 0.3 4.5z" fill="#f0f0f0"/><circle cx="7.5" cy="4.5" r="3" fill="#2a2a2a"/><circle cx="7.5" cy="4.5" r="1.6" fill="#f0f0f0"/></svg>
<svg style="position:absolute;left:1709px;top:793.8px;" width="16" height="16" viewBox="0 0 16 16"><path d="M8 0v16M0 8h16" stroke="#3aad1c" stroke-width="2"/></svg>
<div style="left:445px;top:832px;width:149px;height:28px;background:#292929"></div>
<div style="left:445px;top:832px;width:4px;height:28px;background:#3a95c0"></div>
<svg style="position:absolute;left:465px;top:841.3px;" width="9" height="9" viewBox="0 0 9 9"><path d="M4.5 0v9M0 4.5h9" stroke="#f0f0f0" stroke-width="1.8"/></svg>
<div class="t" style="left:483.4px;top:837.8px;font-size:12px;line-height:16px;color:#ececec;transform:scaleX(0.975);transform-origin:0 50%;">Flow Group #3</div>
<svg style="position:absolute;left:572.5px;top:841.3px;" width="15" height="9" viewBox="0 0 15 9"><path d="M0.3 4.5C3 -0.5 12 -0.5 14.7 4.5C12 9.5 3 9.5 0.3 4.5z" fill="#f0f0f0"/><circle cx="7.5" cy="4.5" r="3" fill="#2a2a2a"/><circle cx="7.5" cy="4.5" r="1.6" fill="#f0f0f0"/></svg>
<svg style="position:absolute;left:1709px;top:837.8px;" width="16" height="16" viewBox="0 0 16 16"><path d="M8 0v16M0 8h16" stroke="#3aad1c" stroke-width="2"/></svg>
<svg style="position:absolute;left:0px;top:0px;" width="1770" height="1025" viewBox="0 0 1770 1025"><path d="M603.5 757.5L616.5 744.75H714.5L727.5 757.5L714.5 770.25H616.5z" fill="#3c3c3c" stroke="#3a9ad8" stroke-width="1.4"/><path d="M641 737.0L646 732.25H686L691 737.0L686 741.75H646z" fill="#333333" stroke="#606060" stroke-width="1.1"/><path d="M740.75 745.8000000000001L751.5 756.7L740.75 767.6L730.0 756.7z" fill="#fafafa"/><path d="M738.75 753.1L739.35 752.4000000000001H746.15L743.75 761.3000000000001H737.15L737.75 760.5" fill="none" stroke="#111" stroke-width="1.5" stroke-linejoin="round"/><path d="M733.75 755.4000000000001h6M734.45 757.7h5" stroke="#333" stroke-width="1.3"/><path d="M754.5 757.5L767.5 744.75H850.3L863.3 757.5L850.3 770.25H767.5z" fill="#3b3b3b" stroke="#575757" stroke-width="1.4"/><path d="M783 737.0L788 732.25H828L833 737.0L828 741.75H788z" fill="#333333" stroke="#606060" stroke-width="1.1"/><path d="M877.1 745.8000000000001L888.2 756.7L877.1 767.6L866.0 756.7z" fill="#fafafa"/><ellipse cx="877.4" cy="757.0" rx="7.6" ry="5" fill="#fff" stroke="#1a1a1a" stroke-width="1.2"/><circle cx="873.8000000000001" cy="753.3000000000001" r="1.9" fill="#d01c28"/><path d="M891 757.5L904 744.75H971.4L984.4 757.5L971.4 770.25H904z" fill="#3b3b3b" stroke="#575757" stroke-width="1.4"/><path d="M912 737.0L917 732.25H957L962 737.0L957 741.75H917z" fill="#333333" stroke="#606060" stroke-width="1.1"/><path d="M997.7 745.8000000000001L1008.6000000000001 756.7L997.7 767.6L986.8 756.7z" fill="#fafafa"/><ellipse cx="998.0" cy="757.0" rx="7.6" ry="5" fill="#fff" stroke="#1a1a1a" stroke-width="1.2"/><circle cx="994.4000000000001" cy="753.3000000000001" r="1.9" fill="#d01c28"/><path d="M1011.7 757.5L1024.7 744.75H1075.4L1088.4 757.5L1075.4 770.25H1024.7z" fill="#3b3b3b" stroke="#575757" stroke-width="1.4"/><path d="M1025 737.0L1030 732.25H1070L1075 737.0L1070 741.75H1030z" fill="#333333" stroke="#606060" stroke-width="1.1"/><path d="M1101.8 745.8000000000001L1112.6 756.7L1101.8 767.6L1091.0 756.7z" fill="#fafafa"/><path d="M1099.8 753.1L1100.3999999999999 752.4000000000001H1107.2L1104.8 761.3000000000001H1098.2L1098.8 760.5" fill="none" stroke="#111" stroke-width="1.5" stroke-linejoin="round"/><path d="M1094.8 755.4000000000001h6M1095.5 757.7h5" stroke="#333" stroke-width="1.3"/><path d="M1115.4 757.5L1128.4 744.75H1159L1172 757.5L1159 770.25H1128.4z" fill="#1f4a5c" stroke="#8a8a8a" stroke-width="1.4"/><path d="M1119 737.0L1124 732.25H1164L1169 737.0L1164 741.75H1124z" fill="#333333" stroke="#606060" stroke-width="1.1"/><path d="M603.5 801.5L616.5 788.75H698L711 801.5L698 814.25H616.5z" fill="#3b3b3b" stroke="#575757" stroke-width="1.4"/><path d="M633.5 781.0L638.5 776.25H677.5L682.5 781.0L677.5 785.75H638.5z" fill="#333333" stroke="#606060" stroke-width="1.1"/><path d="M724.5999999999999 789.8000000000001L735.3999999999999 800.7L724.5999999999999 811.6L713.8 800.7z" fill="#fafafa"/><path d="M722.5999999999999 797.1L723.1999999999999 796.4000000000001H729.9999999999999L727.5999999999999 805.3000000000001H720.9999999999999L721.5999999999999 804.5" fill="none" stroke="#111" stroke-width="1.5" stroke-linejoin="round"/><path d="M717.5999999999999 799.4000000000001h6M718.3 801.7h5" stroke="#333" stroke-width="1.3"/><path d="M738.7 801.5L751.7 788.75H819.3L832.3 801.5L819.3 814.25H751.7z" fill="#3b3b3b" stroke="#575757" stroke-width="1.4"/><path d="M760.3 781.0L765.3 776.25H804.3L809.3 781.0L804.3 785.75H765.3z" fill="#333333" stroke="#606060" stroke-width="1.1"/><path d="M603.5 845.5L616.5 832.75H682L695 845.5L682 858.25H616.5z" fill="#3b3b3b" stroke="#575757" stroke-width="1.4"/><path d="M625.2 825.0L630.2 820.25H670L675 825.0L670 829.75H630.2z" fill="#333333" stroke="#606060" stroke-width="1.1"/><path d="M708.5 833.8000000000001L719.3 844.7L708.5 855.6L697.7 844.7z" fill="#fafafa"/><path d="M706.5 841.1L707.1 840.4000000000001H713.9L711.5 849.3000000000001H704.9L705.5 848.5" fill="none" stroke="#111" stroke-width="1.5" stroke-linejoin="round"/><path d="M701.5 843.4000000000001h6M702.2 845.7h5" stroke="#333" stroke-width="1.3"/><path d="M722.6 845.5L735.6 832.75H786.6L799.6 845.5L786.6 858.25H735.6z" fill="#3b3b3b" stroke="#575757" stroke-width="1.4"/><path d="M736 825.0L741 820.25H780.8L785.8 825.0L780.8 829.75H741z" fill="#333333" stroke="#606060" stroke-width="1.1"/></svg>
<div class="t" style="left:664.5px;top:750.0px;font-size:11.6px;line-height:15px;color:#ececec;transform:translateX(-50%)">FeederBrakeDisk</div>
<div class="t" style="left:807.9px;top:750.0px;font-size:11.6px;line-height:15px;color:#ececec;transform:translateX(-50%)">AddBrakeDisk</div>
<div class="t" style="left:936.7px;top:750.0px;font-size:11.6px;line-height:15px;color:#ececec;transform:translateX(-50%)">AddSpacer</div>
<div class="t" style="left:1049.0500000000002px;top:750.0px;font-size:11.6px;line-height:15px;color:#ececec;transform:translateX(-50%)">AddRim</div>
<div class="t" style="left:1142.7px;top:750.0px;font-size:11.6px;line-height:15px;color:#ececec;transform:translateX(-50%)">Sink</div>
<div class="t" style="left:656.25px;top:794.0px;font-size:11.6px;line-height:15px;color:#ececec;transform:translateX(-50%)">FeederSpacer</div>
<div class="t" style="left:784.5px;top:794.0px;font-size:11.6px;line-height:15px;color:#ececec;transform:translateX(-50%)">AddSpacer</div>
<div class="t" style="left:648.25px;top:838.0px;font-size:11.6px;line-height:15px;color:#ececec;transform:translateX(-50%)">FeederRim</div>
<div class="t" style="left:760.1px;top:838.0px;font-size:11.6px;line-height:15px;color:#ececec;transform:translateX(-50%)">AddRim</div>
<div style="left:437px;top:998px;width:66px;height:27px;background:#333333;border-top:1px solid #555;border-right:1px solid #555"></div>
<div style="left:503px;top:1022px;width:145px;height:1px;background:#555"></div>
<div style="left:647px;top:998px;width:1px;height:25px;background:#555"></div>
<div style="left:647px;top:998px;width:1090px;height:1px;background:#555"></div>
<div style="left:1736px;top:699px;width:1px;height:300px;background:#555"></div>
<div class="t" style="left:447px;top:1003.5px;font-size:14px;line-height:18px;color:#9a9a9a;transform:scaleX(1.095);transform-origin:0 50%;">Output</div>
<div class="t" style="left:513.3px;top:1003.5px;font-size:14px;line-height:18px;color:#ececec;">Process Flow Editor</div>
<div style="left:1737px;top:132px;width:33px;height:893px;background:#2b2b2b"></div>
<div style="left:1741px;top:132px;width:1px;height:893px;background:#5e5e5e"></div>
<div style="left:321px;top:162px;width:350px;height:233px;background:#2d2d2d"></div>
<div style="left:323px;top:164px;width:346px;height:229px;background:#484848"></div>
<div style="left:323px;top:164px;width:346px;height:29px;background:#4a4a4a"></div>
<div class="t" style="left:331.6px;top:170.5px;font-size:13.2px;line-height:17px;color:#e6e6e6;">Feeder Process #4::ProcessExecutor</div>
<svg style="position:absolute;left:644px;top:174px;" width="11" height="11" viewBox="0 0 11 11"><path d="M1 1L10 10M10 1L1 10" stroke="#cfcfcf" stroke-width="2.6"/></svg>
<div style="left:326px;top:193px;width:340px;height:197px;background:#2a2a2a;border:2px solid #5f5f5f;border-top:1px solid #626262"></div>
<div style="left:429px;top:194px;width:235px;height:29px;background:#333333;border-left:1px solid #5f5f5f;border-bottom:1px solid #666"></div>
<div class="t" style="left:335.3px;top:200.3px;font-size:11.6px;line-height:15px;color:#ececec;">FeederRim</div>
<svg style="position:absolute;left:405px;top:200px;" width="12" height="15" viewBox="0 0 12 15"><g fill="none" stroke="#ececec"><rect x="3.8" y="0.6" width="3.6" height="1.8" rx="0.8" stroke-width="1.1"/><rect x="0.7" y="2.9" width="9.8" height="1.6" rx="0.8" stroke-width="1.2"/><rect x="1.6" y="5.2" width="8" height="8.6" rx="0.4" stroke-width="1.2"/><path d="M3.9 6.6v5.6M5.6 6.6v5.6M7.3 6.6v5.6" stroke-width="0.9" stroke-linecap="round"/></g></svg>
<svg style="position:absolute;left:611px;top:200px;" width="16" height="16" viewBox="0 0 16 16"><rect x="6.0" y="0" width="4" height="16" fill="#3aad1c"/><rect x="0" y="6.0" width="16" height="4" fill="#3aad1c"/></svg>
<svg style="position:absolute;left:640px;top:198px;" width="20" height="20" viewBox="0 0 20 20"><rect x="0.6" y="0.6" width="18.8" height="18.8" fill="none" stroke="#b4b4b4" stroke-width="1.2"/><circle cx="4.2" cy="4.2" r="2" fill="#ececec"/><circle cx="4.2" cy="9.3" r="2" fill="#ececec"/><circle cx="4.2" cy="14.399999999999999" r="2" fill="#ececec"/><circle cx="9.3" cy="4.2" r="2" fill="#ececec"/><circle cx="9.3" cy="9.3" r="2" fill="#ececec"/><circle cx="9.3" cy="14.399999999999999" r="2" fill="#ececec"/><circle cx="14.399999999999999" cy="4.2" r="2" fill="#ececec"/><circle cx="14.399999999999999" cy="9.3" r="2" fill="#ececec"/><circle cx="14.3" cy="14.3" r="3.7" fill="#3aad1c"/><path d="M14.3 12.2v4.2M12.2 14.3h4.2" stroke="#2a2a2a" stroke-width="1.1"/></svg>
<div style="left:332px;top:227px;width:328px;height:157px;border:1px solid #6a6a6a;background:#282828"></div>
<div style="left:333px;top:269px;width:326px;height:3px;background:#555555"></div>
<svg style="position:absolute;left:355.5px;top:274.0px;" width="16" height="16" viewBox="0 0 16 16"><path d="M1 4l3-3h7v9l-3 3H1z" fill="#f5b400"/><path d="M1 4h7v9" fill="none" stroke="#c88a00" stroke-width="0.8"/><path d="M8 4l3-3" stroke="#c88a00" stroke-width="0.8"/><circle cx="11.5" cy="12.5" r="2.6" fill="#2a2a2a" stroke="#2da82d" stroke-width="1.8"/></svg>
<div class="t" style="left:376px;top:275.0px;font-size:11.6px;line-height:15px;color:#ececec;">Create: Rim as ProductIn</div>
<svg style="position:absolute;left:355.5px;top:294.0px;" width="15" height="16" viewBox="0 0 15 16"><path d="M0.8 8.5v6h13v-6" fill="none" stroke="#ececec" stroke-width="1.5"/><rect x="3" y="4.2" width="8.5" height="8" fill="#f5b400" stroke="#c08000" stroke-width="0.5"/><circle cx="7.2" cy="8.6" r="1.9" fill="#2a2a2a"/><circle cx="7.4" cy="8.4" r="0.7" fill="#c08000"/><path d="M6.2 0.5h2.2v2.2h1.8L7.3 5.5 4.4 2.7h1.8z" fill="#2aa52a"/></svg>
<div class="t" style="left:376px;top:295.0px;font-size:11.6px;line-height:15px;color:#ececec;">TransportOut: ProductIn</div>
<div style="left:582px;top:-2px;width:350px;height:193px;background:#2d2d2d"></div>
<div style="left:584px;top:0px;width:346px;height:189px;background:#484848"></div>
<div style="left:584px;top:0px;width:346px;height:29px;background:#4a4a4a"></div>
<div class="t" style="left:592.6px;top:6.5px;font-size:13.2px;line-height:17px;color:#e6e6e6;">Sink Process::ProcessExecutor</div>
<svg style="position:absolute;left:905px;top:10px;" width="11" height="11" viewBox="0 0 11 11"><path d="M1 1L10 10M10 1L1 10" stroke="#cfcfcf" stroke-width="2.6"/></svg>
<div style="left:587px;top:29px;width:340px;height:157px;background:#2a2a2a;border:2px solid #5f5f5f;border-top:1px solid #626262"></div>
<div style="left:674px;top:30px;width:251px;height:29px;background:#333333;border-left:1px solid #5f5f5f;border-bottom:1px solid #666"></div>
<div class="t" style="left:596.3px;top:36.3px;font-size:11.6px;line-height:15px;color:#ececec;">Sink</div>
<svg style="position:absolute;left:650px;top:36px;" width="12" height="15" viewBox="0 0 12 15"><g fill="none" stroke="#ececec"><rect x="3.8" y="0.6" width="3.6" height="1.8" rx="0.8" stroke-width="1.1"/><rect x="0.7" y="2.9" width="9.8" height="1.6" rx="0.8" stroke-width="1.2"/><rect x="1.6" y="5.2" width="8" height="8.6" rx="0.4" stroke-width="1.2"/><path d="M3.9 6.6v5.6M5.6 6.6v5.6M7.3 6.6v5.6" stroke-width="0.9" stroke-linecap="round"/></g></svg>
<svg style="position:absolute;left:872px;top:36px;" width="16" height="16" viewBox="0 0 16 16"><rect x="6.0" y="0" width="4" height="16" fill="#3aad1c"/><rect x="0" y="6.0" width="16" height="4" fill="#3aad1c"/></svg>
<svg style="position:absolute;left:901px;top:34px;" width="20" height="20" viewBox="0 0 20 20"><rect x="0.6" y="0.6" width="18.8" height="18.8" fill="none" stroke="#b4b4b4" stroke-width="1.2"/><circle cx="4.2" cy="4.2" r="2" fill="#ececec"/><circle cx="4.2" cy="9.3" r="2" fill="#ececec"/><circle cx="4.2" cy="14.399999999999999" r="2" fill="#ececec"/><circle cx="9.3" cy="4.2" r="2" fill="#ececec"/><circle cx="9.3" cy="9.3" r="2" fill="#ececec"/><circle cx="9.3" cy="14.399999999999999" r="2" fill="#ececec"/><circle cx="14.399999999999999" cy="4.2" r="2" fill="#ececec"/><circle cx="14.399999999999999" cy="9.3" r="2" fill="#ececec"/><circle cx="14.3" cy="14.3" r="3.7" fill="#3aad1c"/><path d="M14.3 12.2v4.2M12.2 14.3h4.2" stroke="#2a2a2a" stroke-width="1.1"/></svg>
<div style="left:593px;top:63px;width:328px;height:117px;border:1px solid #6a6a6a;background:#282828"></div>
<div style="left:594px;top:95px;width:326px;height:3px;background:#555555"></div>
<svg style="position:absolute;left:616.5px;top:100.0px;" width="15" height="16" viewBox="0 0 15 16"><path d="M0.8 8.5v6h13v-6" fill="none" stroke="#ececec" stroke-width="1.5"/><rect x="3" y="4.2" width="8.5" height="8" fill="#f5b400" stroke="#c08000" stroke-width="0.5"/><circle cx="7.2" cy="8.6" r="1.9" fill="#2a2a2a"/><circle cx="7.4" cy="8.4" r="0.7" fill="#c08000"/><path d="M6.2 0.5h2.2v2.2h1.8L7.3 5.5 4.4 2.7h1.8z" fill="#2aa52a"/></svg>
<div class="t" style="left:634px;top:101.0px;font-size:11.6px;line-height:15px;color:#ececec;">TransportIn: Any product as ProductIn</div>
<svg style="position:absolute;left:836.4409px;top:100.2px;" width="17" height="16" viewBox="0 0 17 16"><path d="M0.9 10.6V2.7Q0.9 1.9 1.7 1.9H11Q11.8 1.9 11.8 2.7" fill="none" stroke="#68bdec" stroke-width="1.2"/><rect x="3.8" y="5.1" width="11.8" height="9.8" rx="0.9" fill="#2a2a2a" stroke="#68bdec" stroke-width="1.3"/><path d="M6.6 10L8.7 12.3L13 7.4" fill="none" stroke="#68bdec" stroke-width="1.3"/></svg>
<svg style="position:absolute;left:616.5px;top:120.0px;" width="16" height="16" viewBox="0 0 16 16"><path d="M1 4l3-3h7v9l-3 3H1z" fill="#f5b400"/><path d="M1 4h7v9" fill="none" stroke="#c88a00" stroke-width="0.8"/><path d="M8 4l3-3" stroke="#c88a00" stroke-width="0.8"/><circle cx="11.5" cy="12.5" r="2.6" fill="#2a2a2a" stroke="#c8282d" stroke-width="1.8"/></svg>
<div class="t" style="left:637px;top:121.0px;font-size:11.6px;line-height:15px;color:#ececec;">Remove: ProductIn</div>
<div style="left:302px;top:412px;width:410px;height:282px;background:#2d2d2d"></div>
<div style="left:304px;top:414px;width:406px;height:278px;background:#484848"></div>
<div style="left:304px;top:414px;width:406px;height:29px;background:#4a4a4a"></div>
<div class="t" style="left:312.6px;top:420.5px;font-size:13.2px;line-height:17px;color:#e6e6e6;">Process Node #23::ProcessExecutor</div>
<svg style="position:absolute;left:685px;top:424px;" width="11" height="11" viewBox="0 0 11 11"><path d="M1 1L10 10M10 1L1 10" stroke="#cfcfcf" stroke-width="2.6"/></svg>
<div style="left:307px;top:443px;width:400px;height:246px;background:#2a2a2a;border:2px solid #5f5f5f;border-top:1px solid #626262"></div>
<div style="left:396px;top:444px;width:309px;height:29px;background:#333333;border-left:1px solid #5f5f5f;border-bottom:1px solid #666"></div>
<div class="t" style="left:316.3px;top:450.3px;font-size:11.6px;line-height:15px;color:#ececec;">AddRim</div>
<svg style="position:absolute;left:372px;top:450px;" width="12" height="15" viewBox="0 0 12 15"><g fill="none" stroke="#ececec"><rect x="3.8" y="0.6" width="3.6" height="1.8" rx="0.8" stroke-width="1.1"/><rect x="0.7" y="2.9" width="9.8" height="1.6" rx="0.8" stroke-width="1.2"/><rect x="1.6" y="5.2" width="8" height="8.6" rx="0.4" stroke-width="1.2"/><path d="M3.9 6.6v5.6M5.6 6.6v5.6M7.3 6.6v5.6" stroke-width="0.9" stroke-linecap="round"/></g></svg>
<svg style="position:absolute;left:652px;top:450px;" width="16" height="16" viewBox="0 0 16 16"><rect x="6.0" y="0" width="4" height="16" fill="#3aad1c"/><rect x="0" y="6.0" width="16" height="4" fill="#3aad1c"/></svg>
<svg style="position:absolute;left:681px;top:448px;" width="20" height="20" viewBox="0 0 20 20"><rect x="0.6" y="0.6" width="18.8" height="18.8" fill="none" stroke="#b4b4b4" stroke-width="1.2"/><circle cx="4.2" cy="4.2" r="2" fill="#ececec"/><circle cx="4.2" cy="9.3" r="2" fill="#ececec"/><circle cx="4.2" cy="14.399999999999999" r="2" fill="#ececec"/><circle cx="9.3" cy="4.2" r="2" fill="#ececec"/><circle cx="9.3" cy="9.3" r="2" fill="#ececec"/><circle cx="9.3" cy="14.399999999999999" r="2" fill="#ececec"/><circle cx="14.399999999999999" cy="4.2" r="2" fill="#ececec"/><circle cx="14.399999999999999" cy="9.3" r="2" fill="#ececec"/><circle cx="14.3" cy="14.3" r="3.7" fill="#3aad1c"/><path d="M14.3 12.2v4.2M12.2 14.3h4.2" stroke="#2a2a2a" stroke-width="1.1"/></svg>
<div style="left:313px;top:477px;width:388px;height:206px;border:1px solid #6a6a6a;background:#282828"></div>
<div style="left:314px;top:532px;width:386px;height:3px;background:#555555"></div>
<svg style="position:absolute;left:336.5px;top:537.0px;" width="15" height="16" viewBox="0 0 15 16"><path d="M0.8 8.5v6h13v-6" fill="none" stroke="#ececec" stroke-width="1.5"/><rect x="3" y="4.2" width="8.5" height="8" fill="#f5b400" stroke="#c08000" stroke-width="0.5"/><circle cx="7.2" cy="8.6" r="1.9" fill="#2a2a2a"/><circle cx="7.4" cy="8.4" r="0.7" fill="#c08000"/><path d="M6.2 0.5h2.2v2.2h1.8L7.3 5.5 4.4 2.7h1.8z" fill="#2aa52a"/></svg>
<div class="t" style="left:354px;top:538.0px;font-size:11.6px;line-height:15px;color:#ececec;">TransportIn: Any product as Spacer</div>
<svg style="position:absolute;left:543.5438750000001px;top:537.2px;" width="17" height="16" viewBox="0 0 17 16"><path d="M0.9 10.6V2.7Q0.9 1.9 1.7 1.9H11Q11.8 1.9 11.8 2.7" fill="none" stroke="#68bdec" stroke-width="1.2"/><rect x="3.8" y="5.1" width="11.8" height="9.8" rx="0.9" fill="#2a2a2a" stroke="#68bdec" stroke-width="1.3"/><path d="M6.6 10L8.7 12.3L13 7.4" fill="none" stroke="#68bdec" stroke-width="1.3"/></svg>
<svg style="position:absolute;left:336.5px;top:557.0px;" width="17" height="17" viewBox="0 0 17 17"><g stroke-linecap="round" stroke-width="2.6"><path d="M2.4 3.2h8.6" stroke="#27b060"/><path d="M2.6 7.4h6.2" stroke="#f5b400"/><path d="M3.6 11.4h4" stroke="#27b060"/></g><path d="M8.6 7.2c0-1 1.6-1 1.6 0v3.4l0.4-0.2c0.6-0.3 1.3 0 1.4 0.6l0.3-0.1c0.6-0.2 1.2 0.1 1.3 0.7c0.6-0.2 1.2 0.2 1.2 0.8v2.4l-1.2 2.2H10.2L7.4 13.4c-0.4-0.6 0.2-1.4 0.9-1.1l0.3 0.2z" fill="#f5b400" stroke="#2a2a2a" stroke-width="0.6"/><path d="M10.4 5.2l1.2-1.2" stroke="#f5b400" stroke-width="0.9"/></svg>
<div class="t" style="left:357px;top:558.0px;font-size:11.6px;line-height:15px;color:#ececec;">GetAssembly: Assembly step as AssemblyOrderRim</div>
<svg style="position:absolute;left:336.5px;top:577.0px;" width="15" height="16" viewBox="0 0 15 16"><path d="M0.8 8.5v6h13v-6" fill="none" stroke="#ececec" stroke-width="1.5"/><rect x="3" y="4.2" width="8.5" height="8" fill="#f5b400" stroke="#c08000" stroke-width="0.5"/><circle cx="7.2" cy="8.6" r="1.9" fill="#2a2a2a"/><circle cx="7.4" cy="8.4" r="0.7" fill="#c08000"/><path d="M6.2 0.5h2.2v2.2h1.8L7.3 5.5 4.4 2.7h1.8z" fill="#2aa52a"/></svg>
<div class="t" style="left:354px;top:578.0px;font-size:11.6px;line-height:15px;color:#ececec;">TransportIn: Spacer, AssemblyOrderRim as ArriveRim</div>
<svg style="position:absolute;left:638.2649437499999px;top:577.2px;" width="17" height="16" viewBox="0 0 17 16"><path d="M0.9 10.6V2.7Q0.9 1.9 1.7 1.9H11Q11.8 1.9 11.8 2.7" fill="none" stroke="#68bdec" stroke-width="1.2"/><rect x="3.8" y="5.1" width="11.8" height="9.8" rx="0.9" fill="#2a2a2a" stroke="#68bdec" stroke-width="1.3"/><path d="M6.6 10L8.7 12.3L13 7.4" fill="none" stroke="#68bdec" stroke-width="1.3"/></svg>
<svg style="position:absolute;left:336.5px;top:597.0px;" width="17" height="17" viewBox="0 0 17 17"><path d="M0.8 1h8.4M0.8 12.6h8.4" stroke="#e0e0e0" stroke-width="1.3"/><path d="M1.8 1.3C1.8 5 4.4 5.6 4.4 6.8S1.8 8.6 1.8 12.3M8.2 1.3C8.2 5 5.6 5.6 5.6 6.8S8.2 8.6 8.2 12.3" fill="none" stroke="#e0e0e0" stroke-width="1"/><path d="M2.8 2.6h4.4L5 5.6z" fill="#f5b400"/><path d="M5 8.6L7.4 11.6H2.6z" fill="#f5b400"/><circle cx="11.2" cy="11.2" r="4.3" fill="#2a2a2a" stroke="#e0e0e0" stroke-width="1.1"/><path d="M10.6 8.8l1 2.6" stroke="#f5b400" stroke-width="0.9"/></svg>
<div class="t" style="left:357px;top:598.0px;font-size:11.6px;line-height:15px;color:#ececec;">Delay: 10s</div>
<svg style="position:absolute;left:336.5px;top:617.0px;" width="15" height="16" viewBox="0 0 15 16"><path d="M0.8 8.5v6h13v-6" fill="none" stroke="#ececec" stroke-width="1.5"/><rect x="3" y="4.2" width="8.5" height="8" fill="#f5b400" stroke="#c08000" stroke-width="0.5"/><circle cx="7.2" cy="8.6" r="1.9" fill="#2a2a2a"/><circle cx="7.4" cy="8.4" r="0.7" fill="#c08000"/><path d="M6.2 0.5h2.2v2.2h1.8L7.3 5.5 4.4 2.7h1.8z" fill="#2aa52a"/></svg>
<div class="t" style="left:357px;top:618.0px;font-size:11.6px;line-height:15px;color:#ececec;">TransportOut: Spacer</div>
<div style="left:1347px;top:122px;width:423px;height:290px;background:#2d2d2d"></div>
<div style="left:1349px;top:124px;width:419px;height:286px;background:#484848"></div>
<div style="left:1349px;top:124px;width:419px;height:29px;background:#4a4a4a"></div>
<div class="t" style="left:1357.6px;top:130.5px;font-size:13.2px;line-height:17px;color:#e6e6e6;">Process Node #19::ProcessExecutor</div>
<svg style="position:absolute;left:1743px;top:134px;" width="11" height="11" viewBox="0 0 11 11"><path d="M1 1L10 10M10 1L1 10" stroke="#cfcfcf" stroke-width="2.6"/></svg>
<div style="left:1352px;top:153px;width:413px;height:254px;background:#2a2a2a;border:2px solid #5f5f5f;border-top:1px solid #626262"></div>
<div style="left:1456px;top:154px;width:307px;height:29px;background:#333333;border-left:1px solid #5f5f5f;border-bottom:1px solid #666"></div>
<div class="t" style="left:1361.3px;top:160.3px;font-size:11.6px;line-height:15px;color:#ececec;">AddSpacer</div>
<svg style="position:absolute;left:1432px;top:160px;" width="12" height="15" viewBox="0 0 12 15"><g fill="none" stroke="#ececec"><rect x="3.8" y="0.6" width="3.6" height="1.8" rx="0.8" stroke-width="1.1"/><rect x="0.7" y="2.9" width="9.8" height="1.6" rx="0.8" stroke-width="1.2"/><rect x="1.6" y="5.2" width="8" height="8.6" rx="0.4" stroke-width="1.2"/><path d="M3.9 6.6v5.6M5.6 6.6v5.6M7.3 6.6v5.6" stroke-width="0.9" stroke-linecap="round"/></g></svg>
<svg style="position:absolute;left:1710px;top:160px;" width="16" height="16" viewBox="0 0 16 16"><rect x="6.0" y="0" width="4" height="16" fill="#3aad1c"/><rect x="0" y="6.0" width="16" height="4" fill="#3aad1c"/></svg>
<svg style="position:absolute;left:1739px;top:158px;" width="20" height="20" viewBox="0 0 20 20"><rect x="0.6" y="0.6" width="18.8" height="18.8" fill="none" stroke="#b4b4b4" stroke-width="1.2"/><circle cx="4.2" cy="4.2" r="2" fill="#ececec"/><circle cx="4.2" cy="9.3" r="2" fill="#ececec"/><circle cx="4.2" cy="14.399999999999999" r="2" fill="#ececec"/><circle cx="9.3" cy="4.2" r="2" fill="#ececec"/><circle cx="9.3" cy="9.3" r="2" fill="#ececec"/><circle cx="9.3" cy="14.399999999999999" r="2" fill="#ececec"/><circle cx="14.399999999999999" cy="4.2" r="2" fill="#ececec"/><circle cx="14.399999999999999" cy="9.3" r="2" fill="#ececec"/><circle cx="14.3" cy="14.3" r="3.7" fill="#3aad1c"/><path d="M14.3 12.2v4.2M12.2 14.3h4.2" stroke="#2a2a2a" stroke-width="1.1"/></svg>
<div style="left:1358px;top:187px;width:401px;height:214px;border:1px solid #6a6a6a;background:#282828"></div>
<div style="left:1359px;top:245px;width:399px;height:3px;background:#555555"></div>
<svg style="position:absolute;left:1381.5px;top:250.0px;" width="15" height="16" viewBox="0 0 15 16"><path d="M0.8 8.5v6h13v-6" fill="none" stroke="#ececec" stroke-width="1.5"/><rect x="3" y="4.2" width="8.5" height="8" fill="#f5b400" stroke="#c08000" stroke-width="0.5"/><circle cx="7.2" cy="8.6" r="1.9" fill="#2a2a2a"/><circle cx="7.4" cy="8.4" r="0.7" fill="#c08000"/><path d="M6.2 0.5h2.2v2.2h1.8L7.3 5.5 4.4 2.7h1.8z" fill="#2aa52a"/></svg>
<div class="t" style="left:1399px;top:251.0px;font-size:11.6px;line-height:15px;color:#ececec;">TransportIn: Any product as BrakeDisk</div>
<svg style="position:absolute;left:1604.64685px;top:250.2px;" width="17" height="16" viewBox="0 0 17 16"><path d="M0.9 10.6V2.7Q0.9 1.9 1.7 1.9H11Q11.8 1.9 11.8 2.7" fill="none" stroke="#68bdec" stroke-width="1.2"/><rect x="3.8" y="5.1" width="11.8" height="9.8" rx="0.9" fill="#2a2a2a" stroke="#68bdec" stroke-width="1.3"/><path d="M6.6 10L8.7 12.3L13 7.4" fill="none" stroke="#68bdec" stroke-width="1.3"/></svg>
<svg style="position:absolute;left:1381.5px;top:270.0px;" width="17" height="17" viewBox="0 0 17 17"><g stroke-linecap="round" stroke-width="2.6"><path d="M2.4 3.2h8.6" stroke="#27b060"/><path d="M2.6 7.4h6.2" stroke="#f5b400"/><path d="M3.6 11.4h4" stroke="#27b060"/></g><path d="M8.6 7.2c0-1 1.6-1 1.6 0v3.4l0.4-0.2c0.6-0.3 1.3 0 1.4 0.6l0.3-0.1c0.6-0.2 1.2 0.1 1.3 0.7c0.6-0.2 1.2 0.2 1.2 0.8v2.4l-1.2 2.2H10.2L7.4 13.4c-0.4-0.6 0.2-1.4 0.9-1.1l0.3 0.2z" fill="#f5b400" stroke="#2a2a2a" stroke-width="0.6"/><path d="M10.4 5.2l1.2-1.2" stroke="#f5b400" stroke-width="0.9"/></svg>
<div class="t" style="left:1402px;top:271.0px;font-size:11.6px;line-height:15px;color:#ececec;">GetAssembly: Assembly step as AssemblyOrderSpacer</div>
<svg style="position:absolute;left:1381.5px;top:290.0px;" width="15" height="16" viewBox="0 0 15 16"><path d="M0.8 8.5v6h13v-6" fill="none" stroke="#ececec" stroke-width="1.5"/><rect x="3" y="4.2" width="8.5" height="8" fill="#f5b400" stroke="#c08000" stroke-width="0.5"/><circle cx="7.2" cy="8.6" r="1.9" fill="#2a2a2a"/><circle cx="7.4" cy="8.4" r="0.7" fill="#c08000"/><path d="M6.2 0.5h2.2v2.2h1.8L7.3 5.5 4.4 2.7h1.8z" fill="#2aa52a"/></svg>
<div class="t" style="left:1399px;top:291.0px;font-size:11.6px;line-height:15px;color:#ececec;">TransportIn: BrakeDisk, AssemblyOrderSpacer as ArriveSpacer</div>
<svg style="position:absolute;left:1732.2820125px;top:290.2px;" width="17" height="16" viewBox="0 0 17 16"><path d="M0.9 10.6V2.7Q0.9 1.9 1.7 1.9H11Q11.8 1.9 11.8 2.7" fill="none" stroke="#68bdec" stroke-width="1.2"/><rect x="3.8" y="5.1" width="11.8" height="9.8" rx="0.9" fill="#2a2a2a" stroke="#68bdec" stroke-width="1.3"/><path d="M6.6 10L8.7 12.3L13 7.4" fill="none" stroke="#68bdec" stroke-width="1.3"/></svg>
<svg style="position:absolute;left:1381.5px;top:310.0px;" width="15" height="16" viewBox="0 0 15 16"><path d="M0.8 8.5v6h13v-6" fill="none" stroke="#ececec" stroke-width="1.5"/><rect x="3" y="4.2" width="8.5" height="8" fill="#f5b400" stroke="#c08000" stroke-width="0.5"/><circle cx="7.2" cy="8.6" r="1.9" fill="#2a2a2a"/><circle cx="7.4" cy="8.4" r="0.7" fill="#c08000"/><path d="M6.2 0.5h2.2v2.2h1.8L7.3 5.5 4.4 2.7h1.8z" fill="#2aa52a"/></svg>
<div class="t" style="left:1402px;top:311.0px;font-size:11.6px;line-height:15px;color:#ececec;">TransportOut: BrakeDisk</div>
<div style="left:1352px;top:455px;width:350px;height:212px;background:#2d2d2d"></div>
<div style="left:1354px;top:457px;width:346px;height:208px;background:#484848"></div>
<div style="left:1354px;top:457px;width:346px;height:29px;background:#4a4a4a"></div>
<div class="t" style="left:1362.6px;top:463.5px;font-size:13.2px;line-height:17px;color:#e6e6e6;">Feeder Process #2::ProcessExecutor</div>
<svg style="position:absolute;left:1675px;top:467px;" width="11" height="11" viewBox="0 0 11 11"><path d="M1 1L10 10M10 1L1 10" stroke="#cfcfcf" stroke-width="2.6"/></svg>
<div style="left:1357px;top:486px;width:340px;height:176px;background:#2a2a2a;border:2px solid #5f5f5f;border-top:1px solid #626262"></div>
<div style="left:1475px;top:487px;width:220px;height:29px;background:#333333;border-left:1px solid #5f5f5f;border-bottom:1px solid #666"></div>
<div class="t" style="left:1366.3px;top:493.3px;font-size:11.6px;line-height:15px;color:#ececec;">FeederSpacer</div>
<svg style="position:absolute;left:1451px;top:493px;" width="12" height="15" viewBox="0 0 12 15"><g fill="none" stroke="#ececec"><rect x="3.8" y="0.6" width="3.6" height="1.8" rx="0.8" stroke-width="1.1"/><rect x="0.7" y="2.9" width="9.8" height="1.6" rx="0.8" stroke-width="1.2"/><rect x="1.6" y="5.2" width="8" height="8.6" rx="0.4" stroke-width="1.2"/><path d="M3.9 6.6v5.6M5.6 6.6v5.6M7.3 6.6v5.6" stroke-width="0.9" stroke-linecap="round"/></g></svg>
<svg style="position:absolute;left:1642px;top:493px;" width="16" height="16" viewBox="0 0 16 16"><rect x="6.0" y="0" width="4" height="16" fill="#3aad1c"/><rect x="0" y="6.0" width="16" height="4" fill="#3aad1c"/></svg>
<svg style="position:absolute;left:1671px;top:491px;" width="20" height="20" viewBox="0 0 20 20"><rect x="0.6" y="0.6" width="18.8" height="18.8" fill="none" stroke="#b4b4b4" stroke-width="1.2"/><circle cx="4.2" cy="4.2" r="2" fill="#ececec"/><circle cx="4.2" cy="9.3" r="2" fill="#ececec"/><circle cx="4.2" cy="14.399999999999999" r="2" fill="#ececec"/><circle cx="9.3" cy="4.2" r="2" fill="#ececec"/><circle cx="9.3" cy="9.3" r="2" fill="#ececec"/><circle cx="9.3" cy="14.399999999999999" r="2" fill="#ececec"/><circle cx="14.399999999999999" cy="4.2" r="2" fill="#ececec"/><circle cx="14.399999999999999" cy="9.3" r="2" fill="#ececec"/><circle cx="14.3" cy="14.3" r="3.7" fill="#3aad1c"/><path d="M14.3 12.2v4.2M12.2 14.3h4.2" stroke="#2a2a2a" stroke-width="1.1"/></svg>
<div style="left:1363px;top:520px;width:328px;height:136px;border:1px solid #6a6a6a;background:#282828"></div>
<div style="left:1364px;top:557px;width:326px;height:3px;background:#555555"></div>
<svg style="position:absolute;left:1386.5px;top:562.0px;" width="16" height="16" viewBox="0 0 16 16"><path d="M1 4l3-3h7v9l-3 3H1z" fill="#f5b400"/><path d="M1 4h7v9" fill="none" stroke="#c88a00" stroke-width="0.8"/><path d="M8 4l3-3" stroke="#c88a00" stroke-width="0.8"/><circle cx="11.5" cy="12.5" r="2.6" fill="#2a2a2a" stroke="#2da82d" stroke-width="1.8"/></svg>
<div class="t" style="left:1407px;top:563.0px;font-size:11.6px;line-height:15px;color:#ececec;">Create: Spacer as ProductIn</div>
<svg style="position:absolute;left:1386.5px;top:582.0px;" width="15" height="16" viewBox="0 0 15 16"><path d="M0.8 8.5v6h13v-6" fill="none" stroke="#ececec" stroke-width="1.5"/><rect x="3" y="4.2" width="8.5" height="8" fill="#f5b400" stroke="#c08000" stroke-width="0.5"/><circle cx="7.2" cy="8.6" r="1.9" fill="#2a2a2a"/><circle cx="7.4" cy="8.4" r="0.7" fill="#c08000"/><path d="M6.2 0.5h2.2v2.2h1.8L7.3 5.5 4.4 2.7h1.8z" fill="#2aa52a"/></svg>
<div class="t" style="left:1407px;top:583.0px;font-size:11.6px;line-height:15px;color:#ececec;">TransportOut: ProductIn</div>
<div style="left:904px;top:787px;width:350px;height:225px;background:#2d2d2d"></div>
<div style="left:906px;top:789px;width:346px;height:221px;background:#484848"></div>
<div style="left:906px;top:789px;width:346px;height:29px;background:#4a4a4a"></div>
<div class="t" style="left:914.6px;top:795.5px;font-size:13.2px;line-height:17px;color:#e6e6e6;">Feeder Process #5::ProcessExecutor</div>
<svg style="position:absolute;left:1227px;top:799px;" width="11" height="11" viewBox="0 0 11 11"><path d="M1 1L10 10M10 1L1 10" stroke="#cfcfcf" stroke-width="2.6"/></svg>
<div style="left:909px;top:818px;width:340px;height:189px;background:#2a2a2a;border:2px solid #5f5f5f;border-top:1px solid #626262"></div>
<div style="left:1044px;top:819px;width:203px;height:29px;background:#333333;border-left:1px solid #5f5f5f;border-bottom:1px solid #666"></div>
<div class="t" style="left:918.3px;top:825.3px;font-size:11.6px;line-height:15px;color:#ececec;">FeederBrakeDisk</div>
<svg style="position:absolute;left:1020px;top:825px;" width="12" height="15" viewBox="0 0 12 15"><g fill="none" stroke="#ececec"><rect x="3.8" y="0.6" width="3.6" height="1.8" rx="0.8" stroke-width="1.1"/><rect x="0.7" y="2.9" width="9.8" height="1.6" rx="0.8" stroke-width="1.2"/><rect x="1.6" y="5.2" width="8" height="8.6" rx="0.4" stroke-width="1.2"/><path d="M3.9 6.6v5.6M5.6 6.6v5.6M7.3 6.6v5.6" stroke-width="0.9" stroke-linecap="round"/></g></svg>
<svg style="position:absolute;left:1194px;top:825px;" width="16" height="16" viewBox="0 0 16 16"><rect x="6.0" y="0" width="4" height="16" fill="#3aad1c"/><rect x="0" y="6.0" width="16" height="4" fill="#3aad1c"/></svg>
<svg style="position:absolute;left:1223px;top:823px;" width="20" height="20" viewBox="0 0 20 20"><rect x="0.6" y="0.6" width="18.8" height="18.8" fill="none" stroke="#b4b4b4" stroke-width="1.2"/><circle cx="4.2" cy="4.2" r="2" fill="#ececec"/><circle cx="4.2" cy="9.3" r="2" fill="#ececec"/><circle cx="4.2" cy="14.399999999999999" r="2" fill="#ececec"/><circle cx="9.3" cy="4.2" r="2" fill="#ececec"/><circle cx="9.3" cy="9.3" r="2" fill="#ececec"/><circle cx="9.3" cy="14.399999999999999" r="2" fill="#ececec"/><circle cx="14.399999999999999" cy="4.2" r="2" fill="#ececec"/><circle cx="14.399999999999999" cy="9.3" r="2" fill="#ececec"/><circle cx="14.3" cy="14.3" r="3.7" fill="#3aad1c"/><path d="M14.3 12.2v4.2M12.2 14.3h4.2" stroke="#2a2a2a" stroke-width="1.1"/></svg>
<div style="left:915px;top:852px;width:328px;height:149px;border:1px solid #6a6a6a;background:#282828"></div>
<div style="left:916px;top:892px;width:326px;height:3px;background:#555555"></div>
<svg style="position:absolute;left:938.5px;top:897.0px;" width="16" height="16" viewBox="0 0 16 16"><path d="M1 4l3-3h7v9l-3 3H1z" fill="#f5b400"/><path d="M1 4h7v9" fill="none" stroke="#c88a00" stroke-width="0.8"/><path d="M8 4l3-3" stroke="#c88a00" stroke-width="0.8"/><circle cx="11.5" cy="12.5" r="2.6" fill="#2a2a2a" stroke="#2da82d" stroke-width="1.8"/></svg>
<div class="t" style="left:959px;top:898.0px;font-size:11.6px;line-height:15px;color:#ececec;">Create: Brake Disc as ProductIn</div>
<svg style="position:absolute;left:938.5px;top:917.0px;" width="15" height="16" viewBox="0 0 15 16"><path d="M0.8 8.5v6h13v-6" fill="none" stroke="#ececec" stroke-width="1.5"/><rect x="3" y="4.2" width="8.5" height="8" fill="#f5b400" stroke="#c08000" stroke-width="0.5"/><circle cx="7.2" cy="8.6" r="1.9" fill="#2a2a2a"/><circle cx="7.4" cy="8.4" r="0.7" fill="#c08000"/><path d="M6.2 0.5h2.2v2.2h1.8L7.3 5.5 4.4 2.7h1.8z" fill="#2aa52a"/></svg>
<div class="t" style="left:959px;top:918.0px;font-size:11.6px;line-height:15px;color:#ececec;">TransportOut: ProductIn</div>
<div style="left:1283px;top:800px;width:350px;height:233px;background:#2d2d2d"></div>
<div style="left:1285px;top:802px;width:346px;height:229px;background:#484848"></div>
<div style="left:1285px;top:802px;width:346px;height:29px;background:#4a4a4a"></div>
<div class="t" style="left:1293.6px;top:808.5px;font-size:13.2px;line-height:17px;color:#e6e6e6;">Process Node #24::ProcessExecutor</div>
<svg style="position:absolute;left:1606px;top:812px;" width="11" height="11" viewBox="0 0 11 11"><path d="M1 1L10 10M10 1L1 10" stroke="#cfcfcf" stroke-width="2.6"/></svg>
<div style="left:1288px;top:831px;width:340px;height:197px;background:#2a2a2a;border:2px solid #5f5f5f;border-top:1px solid #626262"></div>
<div style="left:1409px;top:832px;width:217px;height:29px;background:#333333;border-left:1px solid #5f5f5f;border-bottom:1px solid #666"></div>
<div class="t" style="left:1297.3px;top:838.3px;font-size:11.6px;line-height:15px;color:#ececec;">AddBrakeDisk</div>
<svg style="position:absolute;left:1385px;top:838px;" width="12" height="15" viewBox="0 0 12 15"><g fill="none" stroke="#ececec"><rect x="3.8" y="0.6" width="3.6" height="1.8" rx="0.8" stroke-width="1.1"/><rect x="0.7" y="2.9" width="9.8" height="1.6" rx="0.8" stroke-width="1.2"/><rect x="1.6" y="5.2" width="8" height="8.6" rx="0.4" stroke-width="1.2"/><path d="M3.9 6.6v5.6M5.6 6.6v5.6M7.3 6.6v5.6" stroke-width="0.9" stroke-linecap="round"/></g></svg>
<svg style="position:absolute;left:1573px;top:838px;" width="16" height="16" viewBox="0 0 16 16"><rect x="6.0" y="0" width="4" height="16" fill="#3aad1c"/><rect x="0" y="6.0" width="16" height="4" fill="#3aad1c"/></svg>
<svg style="position:absolute;left:1602px;top:836px;" width="20" height="20" viewBox="0 0 20 20"><rect x="0.6" y="0.6" width="18.8" height="18.8" fill="none" stroke="#b4b4b4" stroke-width="1.2"/><circle cx="4.2" cy="4.2" r="2" fill="#ececec"/><circle cx="4.2" cy="9.3" r="2" fill="#ececec"/><circle cx="4.2" cy="14.399999999999999" r="2" fill="#ececec"/><circle cx="9.3" cy="4.2" r="2" fill="#ececec"/><circle cx="9.3" cy="9.3" r="2" fill="#ececec"/><circle cx="9.3" cy="14.399999999999999" r="2" fill="#ececec"/><circle cx="14.399999999999999" cy="4.2" r="2" fill="#ececec"/><circle cx="14.399999999999999" cy="9.3" r="2" fill="#ececec"/><circle cx="14.3" cy="14.3" r="3.7" fill="#3aad1c"/><path d="M14.3 12.2v4.2M12.2 14.3h4.2" stroke="#2a2a2a" stroke-width="1.1"/></svg>
<div style="left:1294px;top:865px;width:328px;height:157px;border:1px solid #6a6a6a;background:#282828"></div>
<div style="left:1295px;top:907px;width:326px;height:3px;background:#555555"></div>
<svg style="position:absolute;left:1317.5px;top:912.0px;" width="15" height="16" viewBox="0 0 15 16"><path d="M0.8 8.5v6h13v-6" fill="none" stroke="#ececec" stroke-width="1.5"/><rect x="3" y="4.2" width="8.5" height="8" fill="#f5b400" stroke="#c08000" stroke-width="0.5"/><circle cx="7.2" cy="8.6" r="1.9" fill="#2a2a2a"/><circle cx="7.4" cy="8.4" r="0.7" fill="#c08000"/><path d="M6.2 0.5h2.2v2.2h1.8L7.3 5.5 4.4 2.7h1.8z" fill="#2aa52a"/></svg>
<div class="t" style="left:1335px;top:913.0px;font-size:11.6px;line-height:15px;color:#ececec;">TransportIn: Any product as ArriveBrakeDisk</div>
<svg style="position:absolute;left:1570.298625px;top:912.2px;" width="17" height="16" viewBox="0 0 17 16"><path d="M0.9 10.6V2.7Q0.9 1.9 1.7 1.9H11Q11.8 1.9 11.8 2.7" fill="none" stroke="#68bdec" stroke-width="1.2"/><rect x="3.8" y="5.1" width="11.8" height="9.8" rx="0.9" fill="#2a2a2a" stroke="#68bdec" stroke-width="1.3"/><path d="M6.6 10L8.7 12.3L13 7.4" fill="none" stroke="#68bdec" stroke-width="1.3"/></svg>
<svg style="position:absolute;left:1317.5px;top:932.0px;" width="15" height="16" viewBox="0 0 15 16"><path d="M0.8 8.5v6h13v-6" fill="none" stroke="#ececec" stroke-width="1.5"/><rect x="3" y="4.2" width="8.5" height="8" fill="#f5b400" stroke="#c08000" stroke-width="0.5"/><circle cx="7.2" cy="8.6" r="1.9" fill="#2a2a2a"/><circle cx="7.4" cy="8.4" r="0.7" fill="#c08000"/><path d="M6.2 0.5h2.2v2.2h1.8L7.3 5.5 4.4 2.7h1.8z" fill="#2aa52a"/></svg>
<div class="t" style="left:1338px;top:933.0px;font-size:11.6px;line-height:15px;color:#ececec;">TransportOut: ArriveBrakeDisk</div>
</body></html>
